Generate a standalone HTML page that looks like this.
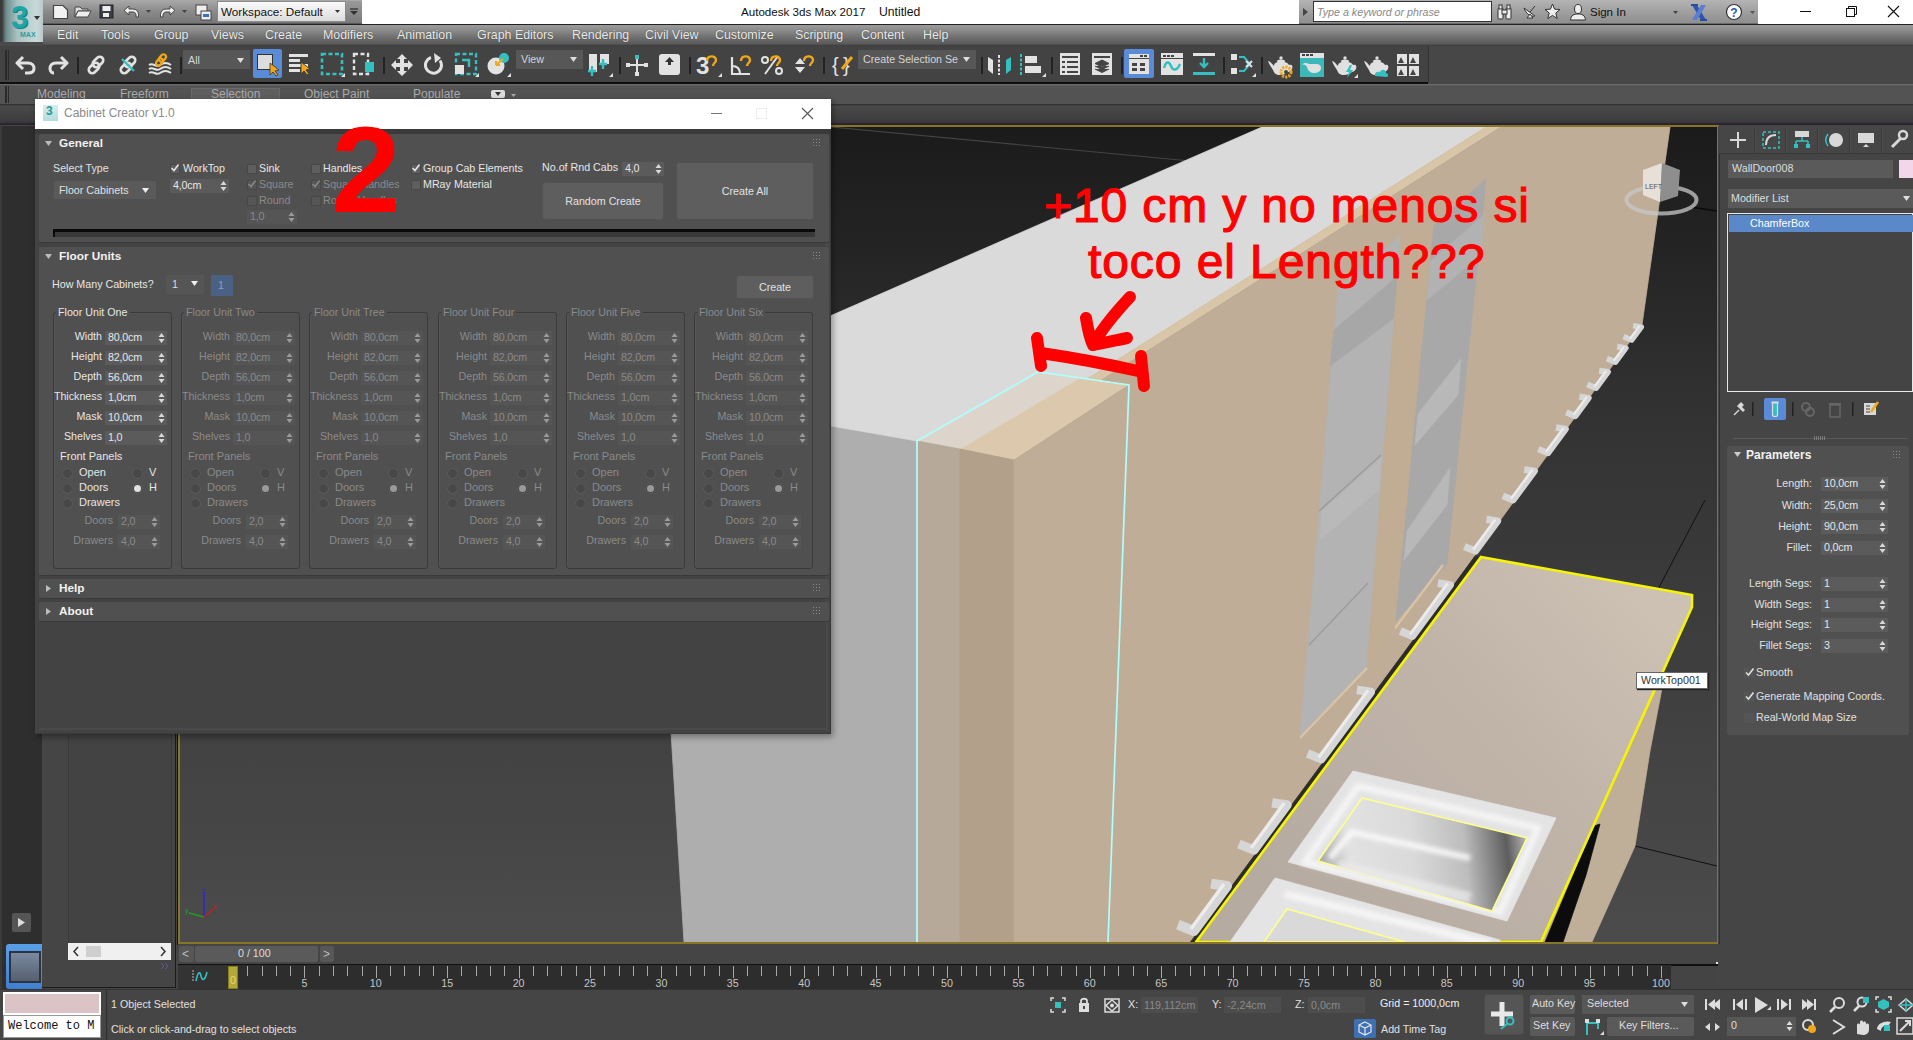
<!DOCTYPE html>
<html><head><meta charset="utf-8"><style>
*{box-sizing:border-box;margin:0;padding:0}
html,body{width:1913px;height:1040px;overflow:hidden;background:#444;font-family:"Liberation Sans",sans-serif;font-size:12px;color:#ddd}
.a{position:absolute}
.t{position:absolute;white-space:nowrap;line-height:1}
.sp{position:absolute;background:#565656;border-top:1px solid #3c3c3c}
.sp b{position:absolute;right:3px;top:2px;width:5px;height:9px}
.btn{position:absolute;background:#5e5e5e;border:1px solid #525252;border-radius:3px;color:#e2e2e2;text-align:center}
</style></head><body>
<div class="a" style="left:0px;top:0px;width:1913px;height:24px;background:#fff"></div>
<div class="a" style="left:0px;top:0px;width:43px;height:43px;background:linear-gradient(90deg,#3a3a3a 0,#3a3a3a 2px,#6f8c8c 6px,#a9c2c2 40%,#c9d9d9 85%,#b9c9c9 100%)"></div>
<div class="t" style="left:11px;top:2px;font-size:31px;font-weight:bold;color:#1ea5a5;letter-spacing:-1px;text-shadow:1px 1px 0 #157f7f">3</div>
<svg class="a" style="left:34px;top:16px" width="6" height="4"><path d="M0 0H6L3 4Z" fill="#333"/></svg>
<div class="t" style="left:20px;top:31px;font-size:7px;font-weight:bold;color:#2a9f9f">MAX</div>
<div class="a" style="left:43px;top:0px;width:319px;height:24px;background:linear-gradient(#a9a9a9,#8a8a8a 50%,#777 100%);border-bottom:1px solid #5a5a5a"></div>
<svg class="a" style="left:52px;top:4px" width="18" height="16"><path d="M1.5 1.5H11L15.5 6V14.5H1.5Z" fill="#f2f2f2" stroke="#444" stroke-width="1.2"/></svg>
<svg class="a" style="left:74px;top:5px" width="18" height="14"><path d="M1 2H6L8 4H14V6H4L1 12Z" fill="#ddd" stroke="#444"/><path d="M4 6H17L14 12H1Z" fill="#eee" stroke="#444"/></svg>
<svg class="a" style="left:99px;top:4px" width="16" height="16"><rect x="1" y="1" width="13" height="13" fill="#3d3d4a" stroke="#222"/><rect x="3.5" y="2" width="8" height="5" fill="#eee"/><rect x="4" y="9" width="6" height="4" fill="#eee"/></svg>
<svg class="a" style="left:123px;top:5px" width="18" height="13"><path d="M6 1L1 5.5L6 10V7H10C12 7 13 8.5 13 10V12H15.5V9.5C15.5 6 13 4 10 4H6Z" fill="#eee" stroke="#444"/></svg>
<svg class="a" style="left:146px;top:10px" width="5" height="3"><path d="M0 0H5L2.5 3Z" fill="#444"/></svg>
<svg class="a" style="left:158px;top:5px" width="18" height="13"><path d="M12 1L17 5.5L12 10V7H8C6 7 5 8.5 5 10V12H2.5V9.5C2.5 6 5 4 8 4H12Z" fill="#eee" stroke="#444"/></svg>
<svg class="a" style="left:182px;top:10px" width="5" height="3"><path d="M0 0H5L2.5 3Z" fill="#444"/></svg>
<svg class="a" style="left:195px;top:3px" width="18" height="18"><rect x="1" y="2" width="11" height="10" fill="#eee" stroke="#444"/><rect x="6" y="8" width="10" height="9" fill="#eee" stroke="#444"/><rect x="8" y="11" width="6" height="3" fill="#3b6fb6"/></svg>
<div class="a" style="left:217px;top:1px;width:129px;height:21px;background:linear-gradient(#fafafa,#dcdcdc);border:1px solid #8a8a8a"></div>
<div class="t" style="left:221px;top:6px;font-size:11.7px;color:#111;">Workspace: Default</div>
<svg class="a" style="left:335px;top:10px" width="5" height="3"><path d="M0 0H5L2.5 3Z" fill="#333"/></svg>
<div class="a" style="left:347px;top:1px;width:15px;height:21px;background:linear-gradient(#9a9a9a,#7c7c7c)"></div>
<svg class="a" style="left:349px;top:8px" width="10" height="8"><path d="M1 1H9" stroke="#333" stroke-width="1.3"/><path d="M1 3H9L5 7Z" fill="#333"/></svg>
<div class="t" style="left:741px;top:6px;font-size:11.6px;color:#111;">Autodesk 3ds Max 2017</div>
<div class="t" style="left:879px;top:6px;font-size:12.2px;color:#111;">Untitled</div>
<div class="a" style="left:1299px;top:0px;width:459px;height:24px;background:linear-gradient(#b4b4b4,#9c9c9c 60%,#8f8f8f);border-bottom:1px solid #6a6a6a"></div>
<svg class="a" style="left:1303px;top:8px" width="5" height="8"><path d="M0 0L5 4L0 8Z" fill="#444"/></svg>
<div class="a" style="left:1313px;top:1px;width:179px;height:21px;background:#fff;border:1px solid #333"></div>
<div class="t" style="left:1317px;top:7px;font-size:10.7px;color:#888;font-style:italic">Type a keyword or phrase</div>
<svg class="a" style="left:1496px;top:4px" width="18" height="16"><rect x="2" y="4" width="5" height="11" rx="1" fill="#eee" stroke="#333"/><rect x="10" y="4" width="5" height="11" rx="1" fill="#eee" stroke="#333"/><rect x="3" y="1" width="3" height="4" fill="#eee" stroke="#333"/><rect x="11" y="1" width="3" height="4" fill="#eee" stroke="#333"/><rect x="6" y="6" width="5" height="4" fill="#eee" stroke="#333"/></svg>
<svg class="a" style="left:1521px;top:4px" width="17" height="17"><path d="M3 4C5 10 10 13 14 12Z" fill="#eee" stroke="#333"/><path d="M6 14L9 10L12 14Z" fill="#eee" stroke="#333"/><path d="M9 8L14 2" stroke="#333"/></svg>
<svg class="a" style="left:1544px;top:3px" width="17" height="17"><path d="M8.5 1L10.6 6.2L16 6.5L11.8 10L13.2 15.5L8.5 12.4L3.8 15.5L5.2 10L1 6.5L6.4 6.2Z" fill="#eee" stroke="#333"/></svg>
<svg class="a" style="left:1569px;top:3px" width="18" height="18"><ellipse cx="9" cy="6" rx="3.5" ry="4.5" fill="#eee" stroke="#333"/><path d="M1.5 17C2 12 5 11 9 11C13 11 16 12 16.5 17Z" fill="#eee" stroke="#333"/></svg>
<div class="t" style="left:1590px;top:7px;font-size:11.5px;color:#111;">Sign In</div>
<svg class="a" style="left:1673px;top:11px" width="5" height="3"><path d="M0 0H5L2.5 3Z" fill="#444"/></svg>
<svg class="a" style="left:1690px;top:4px" width="18" height="17"><path d="M2 1H7L16 16H11Z" fill="#2f55b0"/><path d="M16 1H11L2 16H7Z" fill="#5a7fd0"/><path d="M1 1H8M10 16H17" stroke="#2a4a9a" stroke-width="2"/></svg>
<svg class="a" style="left:1725px;top:3px" width="18" height="18"><circle cx="9" cy="9" r="7.5" fill="#fff" stroke="#333" stroke-width="1.2"/><text x="9" y="13.5" font-family="Liberation Sans" font-weight="bold" font-size="12" fill="#2a57b5" text-anchor="middle">?</text></svg>
<svg class="a" style="left:1750px;top:11px" width="5" height="3"><path d="M0 0H5L2.5 3Z" fill="#555"/></svg>
<svg class="a" style="left:1800px;top:5px" width="110" height="14"><path d="M0 6.5H11" stroke="#111" stroke-width="1"/><rect x="46.5" y="3.5" width="8" height="8" fill="none" stroke="#111"/><path d="M48.5 3.5V1.5H56.5V9.5H54.5" fill="none" stroke="#111"/><path d="M88 1L99 12M99 1L88 12" stroke="#111" stroke-width="1.1"/></svg>
<div class="a" style="left:43px;top:24px;width:1870px;height:22px;background:linear-gradient(#222 0,#222 1px,#9c9c9c 1px,#8a8a8a 30%,#6c6c6c 65%,#5a5a5a 90%,#3a3a3a 100%)"></div>
<div class="a" style="left:0px;top:42px;width:43px;height:4px;background:#4a4a4a"></div>
<div class="t" style="left:57px;top:29px;font-size:12.4px;color:#ececec;text-shadow:0 0 1px #333">Edit</div>
<div class="t" style="left:101px;top:29px;font-size:12.4px;color:#ececec;text-shadow:0 0 1px #333">Tools</div>
<div class="t" style="left:154px;top:29px;font-size:12.4px;color:#ececec;text-shadow:0 0 1px #333">Group</div>
<div class="t" style="left:211px;top:29px;font-size:12.4px;color:#ececec;text-shadow:0 0 1px #333">Views</div>
<div class="t" style="left:265px;top:29px;font-size:12.4px;color:#ececec;text-shadow:0 0 1px #333">Create</div>
<div class="t" style="left:323px;top:29px;font-size:12.4px;color:#ececec;text-shadow:0 0 1px #333">Modifiers</div>
<div class="t" style="left:397px;top:29px;font-size:12.4px;color:#ececec;text-shadow:0 0 1px #333">Animation</div>
<div class="t" style="left:477px;top:29px;font-size:12.4px;color:#ececec;text-shadow:0 0 1px #333">Graph Editors</div>
<div class="t" style="left:572px;top:29px;font-size:12.4px;color:#ececec;text-shadow:0 0 1px #333">Rendering</div>
<div class="t" style="left:645px;top:29px;font-size:12.4px;color:#ececec;text-shadow:0 0 1px #333">Civil View</div>
<div class="t" style="left:715px;top:29px;font-size:12.4px;color:#ececec;text-shadow:0 0 1px #333">Customize</div>
<div class="t" style="left:795px;top:29px;font-size:12.4px;color:#ececec;text-shadow:0 0 1px #333">Scripting</div>
<div class="t" style="left:861px;top:29px;font-size:12.4px;color:#ececec;text-shadow:0 0 1px #333">Content</div>
<div class="t" style="left:923px;top:29px;font-size:12.4px;color:#ececec;text-shadow:0 0 1px #333">Help</div>
<div class="a" style="left:0px;top:46px;width:1428px;height:37px;background:#434343"></div>
<div class="a" style="left:1428px;top:46px;width:485px;height:37px;background:#474747;border-left:1px solid #333"></div>
<div class="a" style="left:0px;top:82px;width:1428px;height:2px;background:#0e0e0e"></div>
<div class="a" style="left:1428px;top:82px;width:485px;height:2px;background:#474747"></div>
<div class="a" style="left:0px;top:84px;width:1913px;height:1px;background:#6a6a6a"></div>
<div class="a" style="left:5px;top:50px;width:2px;height:30px;background:#2a2a2a"></div>
<div class="a" style="left:8px;top:50px;width:1px;height:30px;background:#2a2a2a"></div>
<div class="a" style="left:77px;top:57px;width:2px;height:17px;background:#222"></div>
<div class="a" style="left:180px;top:57px;width:2px;height:17px;background:#222"></div>
<div class="a" style="left:383px;top:57px;width:2px;height:17px;background:#222"></div>
<div class="a" style="left:619px;top:57px;width:2px;height:17px;background:#222"></div>
<div class="a" style="left:689px;top:57px;width:2px;height:17px;background:#222"></div>
<div class="a" style="left:823px;top:57px;width:2px;height:17px;background:#222"></div>
<div class="a" style="left:981px;top:57px;width:2px;height:17px;background:#222"></div>
<div class="a" style="left:1051px;top:57px;width:2px;height:17px;background:#222"></div>
<div class="a" style="left:1121px;top:57px;width:2px;height:17px;background:#222"></div>
<div class="a" style="left:1223px;top:57px;width:2px;height:17px;background:#222"></div>
<div class="a" style="left:1261px;top:57px;width:2px;height:17px;background:#222"></div>
<svg class="a" style="left:15px;top:55px" width="23" height="20"><path d="M8 2L2 8L8 14" fill="none" stroke="#e2e2e2" stroke-width="3" stroke-linejoin="round"/><path d="M3 8H13C17 8 19 10.5 19 13.5C19 16.5 17 18 13 18H10" fill="none" stroke="#e2e2e2" stroke-width="3"/></svg>
<svg class="a" style="left:46px;top:55px" width="23" height="20"><path d="M15 2L21 8L15 14" fill="none" stroke="#e2e2e2" stroke-width="3" stroke-linejoin="round"/><path d="M20 8H10C6 8 4 10.5 4 13.5C4 16.5 6 18 8 18" fill="none" stroke="#e2e2e2" stroke-width="3"/></svg>
<svg class="a" style="left:85px;top:54px" width="22" height="22"><g fill="none" stroke="#e2e2e2" stroke-width="2.6"><rect x="9.5" y="2" width="7" height="12" rx="3.5" transform="rotate(45 13 8)"/><rect x="5.5" y="8" width="7" height="12" rx="3.5" transform="rotate(45 9 14)"/></g></svg>
<svg class="a" style="left:117px;top:54px" width="22" height="22"><g fill="none" stroke="#e2e2e2" stroke-width="2.6"><rect x="9.5" y="2" width="7" height="12" rx="3.5" transform="rotate(45 13 8)"/><rect x="5.5" y="8" width="7" height="12" rx="3.5" transform="rotate(45 9 14)"/></g><path d="M5 5L17 17" stroke="#35c0c0" stroke-width="2.2"/></svg>
<svg class="a" style="left:148px;top:53px" width="24" height="24"><g fill="none" stroke="#e2e2e2" stroke-width="2"><path d="M1 12C5 9 8 15 12 12S19 9 23 12"/><path d="M1 16C5 13 8 19 12 16S19 13 23 16"/><path d="M1 20C5 17 8 23 12 20S19 17 23 20"/></g><g fill="none" stroke="#f0a818" stroke-width="2.2"><rect x="12" y="1" width="5" height="8" rx="2.5" transform="rotate(40 14.5 5)"/><rect x="9" y="5" width="5" height="8" rx="2.5" transform="rotate(40 11.5 9)"/></g></svg>
<div class="a" style="left:183px;top:50px;width:67px;height:19px;background:#575757"></div>
<div class="t" style="left:188px;top:55px;font-size:10.7px;color:#d5d5d5;">All</div>
<svg class="a" style="left:237px;top:58px" width="7" height="5"><path d="M0 0H7L3.5 5Z" fill="#ddd"/></svg>
<div class="a" style="left:253px;top:49px;width:29px;height:29px;background:#5a8bd6;border-radius:2px"></div>
<svg class="a" style="left:256px;top:53px" width="25" height="24"><rect x="1.5" y="1.5" width="15" height="15" fill="#ddd" stroke="#333"/><path d="M14 10L14 22L17 19L20 23L22 22L19 18L23 17Z" fill="#f0a818" stroke="#333" stroke-width="0.8"/></svg>
<svg class="a" style="left:288px;top:52px" width="24" height="24"><g fill="#e2e2e2"><rect x="1" y="2" width="19" height="3"/><rect x="1" y="7" width="11" height="3"/><rect x="1" y="12" width="19" height="3"/><rect x="1" y="17" width="11" height="3"/></g><path d="M13 10L13 22L16 19L19 23L21 22L18 18L22 17Z" fill="#f0a818" stroke="#333" stroke-width="0.8"/></svg>
<svg class="a" style="left:320px;top:52px" width="28" height="26"><rect x="2" y="2" width="20" height="20" fill="none" stroke="#35c0c0" stroke-width="2.6" stroke-dasharray="4 2.5"/><path d="M21 25H25V21Z" fill="#e2e2e2"/></svg>
<svg class="a" style="left:352px;top:52px" width="26" height="26"><rect x="2" y="2" width="14" height="20" fill="none" stroke="#e2e2e2" stroke-width="2.4" stroke-dasharray="4 2.5"/><rect x="13" y="10" width="9" height="10" fill="#35c0c0"/></svg>
<svg class="a" style="left:390px;top:53px" width="24" height="24"><path d="M12 1L17 6H14V10H18V7L23 12L18 17V14H14V18H17L12 23L7 18H10V14H6V17L1 12L6 7V10H10V6H7Z" fill="#e2e2e2"/></svg>
<svg class="a" style="left:424px;top:52px" width="22" height="26"><path d="M16 8.5A8 8 0 1 1 7 5.5" fill="none" stroke="#e2e2e2" stroke-width="3"/><path d="M10 1L17 6L11 11Z" fill="#e2e2e2"/></svg>
<svg class="a" style="left:454px;top:52px" width="26" height="26"><rect x="2" y="2" width="20" height="20" fill="none" stroke="#35c0c0" stroke-width="2.4" stroke-dasharray="4 2.5"/><path d="M8 8H15V15" fill="none" stroke="#35c0c0" stroke-width="2.4"/><rect x="1" y="13" width="9" height="9" fill="#e2e2e2"/><path d="M21 25H25V21Z" fill="#e2e2e2"/></svg>
<svg class="a" style="left:486px;top:52px" width="26" height="26"><circle cx="10" cy="14" r="8.5" fill="#e2e2e2"/><circle cx="18" cy="6" r="5" fill="#35c0c0"/><path d="M17 7L10 13M10 13V9M10 13H14" stroke="#f0a818" stroke-width="2" fill="none"/><path d="M21 25H25V21Z" fill="#e2e2e2"/></svg>
<div class="a" style="left:516px;top:50px;width:67px;height:19px;background:#575757"></div>
<div class="t" style="left:521px;top:54px;font-size:10.7px;color:#d5d5d5;">View</div>
<svg class="a" style="left:570px;top:57px" width="7" height="5"><path d="M0 0H7L3.5 5Z" fill="#ddd"/></svg>
<svg class="a" style="left:588px;top:52px" width="26" height="26"><rect x="1" y="2" width="8" height="18" fill="#e2e2e2"/><rect x="12" y="2" width="9" height="10" fill="#e2e2e2"/><path d="M4 14V24M0 19H8M15 7V17M11 12H19" stroke="#35c0c0" stroke-width="2.4"/><path d="M21 25H25V21Z" fill="#e2e2e2"/></svg>
<svg class="a" style="left:625px;top:53px" width="24" height="24"><path d="M3 12H21M12 3V21" stroke="#e2e2e2" stroke-width="2"/><rect x="10" y="2" width="4" height="4" fill="#35c0c0"/><rect x="1" y="10" width="4" height="4" fill="#e2e2e2"/><rect x="19" y="10" width="4" height="4" fill="#e2e2e2"/><rect x="10" y="19" width="4" height="4" fill="#e2e2e2"/></svg>
<svg class="a" style="left:658px;top:53px" width="24" height="24"><rect x="1" y="1" width="21" height="21" rx="3" fill="#e2e2e2"/><path d="M11.5 4L16 9H13V12H10V9H7Z" fill="#333"/></svg>
<svg class="a" style="left:696px;top:52px" width="28" height="26"><text x="0" y="22" font-family="Liberation Sans" font-weight="bold" font-size="24" fill="#e2e2e2">3</text><path d="M11 9C11 3 20 3 20 8C20 11 17 11 17 14" fill="none" stroke="#f0a818" stroke-width="2.4"/><path d="M22 25H26V21Z" fill="#e2e2e2"/></svg>
<svg class="a" style="left:729px;top:52px" width="26" height="26"><path d="M3 5V22H21M3 14C8 14 11 17 11 22" fill="none" stroke="#e2e2e2" stroke-width="2.2"/><path d="M12 9C12 3 21 3 21 8C21 11 18 11 18 14" fill="none" stroke="#f0a818" stroke-width="2.4"/></svg>
<svg class="a" style="left:760px;top:52px" width="26" height="26"><circle cx="5" cy="8" r="3" fill="none" stroke="#e2e2e2" stroke-width="2"/><circle cx="19" cy="19" r="3" fill="none" stroke="#e2e2e2" stroke-width="2"/><path d="M5 22L18 4" stroke="#e2e2e2" stroke-width="2"/><path d="M11 9C11 3 20 3 20 8C20 11 17 11 17 14" fill="none" stroke="#f0a818" stroke-width="2.4"/></svg>
<svg class="a" style="left:792px;top:52px" width="26" height="26"><path d="M3 12L8 6L13 12Z M3 15L8 21L13 15Z" fill="#e2e2e2"/><path d="M12 9C12 3 21 3 21 8C21 11 18 11 18 14" fill="none" stroke="#f0a818" stroke-width="2.4"/></svg>
<svg class="a" style="left:832px;top:52px" width="24" height="26"><text x="0" y="20" font-family="Liberation Sans" font-size="20" fill="#e2e2e2">{</text><text x="11" y="20" font-family="Liberation Sans" font-size="20" fill="#e2e2e2">}</text><path d="M10 17L20 5" stroke="#f0a818" stroke-width="3"/></svg>
<div class="a" style="left:858px;top:50px;width:118px;height:19px;background:#575757"></div>
<div class="t" style="left:863px;top:54px;font-size:10.7px;color:#d5d5d5;">Create Selection Se</div>
<svg class="a" style="left:963px;top:57px" width="7" height="5"><path d="M0 0H7L3.5 5Z" fill="#ddd"/></svg>
<svg class="a" style="left:987px;top:53px" width="26" height="24"><path d="M1 4L6 7V21L1 17Z" fill="#e2e2e2"/><path d="M12 2V22" stroke="#e2e2e2" stroke-width="2" stroke-dasharray="3 1.5"/><path d="M19 7L24 4V17L19 21Z" fill="#35c0c0"/></svg>
<svg class="a" style="left:1019px;top:52px" width="28" height="26"><path d="M2 2V24" stroke="#35c0c0" stroke-width="2" stroke-dasharray="3 1.5"/><rect x="6" y="4" width="12" height="7" fill="#e2e2e2"/><rect x="6" y="14" width="16" height="7" fill="#e2e2e2"/><path d="M23 25H27V21Z" fill="#e2e2e2"/></svg>
<svg class="a" style="left:1059px;top:52px" width="24" height="25"><rect x="1" y="1" width="20" height="22" fill="#e2e2e2"/><rect x="3" y="4" width="16" height="2" fill="#444"/><rect x="3" y="9" width="3" height="2" fill="#444"/><rect x="8" y="9" width="11" height="2" fill="#444"/><rect x="3" y="14" width="3" height="2" fill="#444"/><rect x="8" y="14" width="11" height="2" fill="#444"/><rect x="3" y="19" width="3" height="2" fill="#444"/><rect x="8" y="19" width="11" height="2" fill="#444"/></svg>
<svg class="a" style="left:1091px;top:52px" width="24" height="25"><rect x="1" y="1" width="20" height="22" fill="#e2e2e2"/><rect x="3" y="4" width="16" height="2" fill="#444"/><path d="M11 8L18 11.5L11 15L4 11.5Z M4 14L11 17.5L18 14 M4 17L11 20.5L18 17" fill="#444" stroke="#444"/></svg>
<div class="a" style="left:1124px;top:49px;width:30px;height:29px;background:#5a8bd6;border-radius:2px"></div>
<svg class="a" style="left:1128px;top:53px" width="22" height="22"><rect x="1" y="1" width="20" height="20" fill="#e2e2e2"/><rect x="12" y="2" width="3" height="2" fill="#444"/><rect x="16" y="2" width="3" height="2" fill="#444"/><rect x="1" y="5" width="20" height="1" fill="#444"/><rect x="4" y="10" width="5" height="3" fill="#444"/><rect x="12" y="10" width="5" height="3" fill="#444"/><rect x="4" y="15" width="5" height="3" fill="#444"/><rect x="12" y="15" width="5" height="3" fill="#444"/></svg>
<svg class="a" style="left:1160px;top:52px" width="24" height="24"><rect x="1" y="1" width="22" height="22" fill="#e2e2e2"/><rect x="3" y="3" width="3" height="2" fill="#444"/><rect x="7" y="3" width="3" height="2" fill="#444"/><rect x="11" y="3" width="3" height="2" fill="#444"/><rect x="1" y="6" width="22" height="1" fill="#444"/><path d="M4 16C6 9 9 9 11 14S17 19 20 12" fill="none" stroke="#35c0c0" stroke-width="2.4"/></svg>
<svg class="a" style="left:1191px;top:52px" width="26" height="24"><rect x="2" y="1" width="22" height="3" fill="#e2e2e2"/><path d="M13 6V14M9 11L13 15L17 11" fill="none" stroke="#35c0c0" stroke-width="2.4"/><rect x="2" y="20" width="22" height="3" fill="#35c0c0"/></svg>
<svg class="a" style="left:1230px;top:52px" width="26" height="26"><rect x="1" y="2" width="6" height="6" fill="#e2e2e2"/><rect x="1" y="16" width="6" height="6" fill="#e2e2e2"/><path d="M9 5H14L20 12L14 19H9" fill="none" stroke="#35c0c0" stroke-width="2"/><path d="M16 9L22 15M22 9L16 15" stroke="#e2e2e2" stroke-width="2"/><path d="M22 25H26V21Z" fill="#e2e2e2"/></svg>
<svg class="a" style="left:1266px;top:53px" width="28" height="26"><path d="M2 8C4 8 6 11 8 13C8 10 11 8.5 15 8.5C19 8.5 22 10 23 12C26 11 27 13 26 16C25 18 23 19 22 19C20 21 17 22 14 22C10 22 8 20 7 17C5 14 3 11 2 8Z" fill="#e0e0e0"/><ellipse cx="15" cy="8" rx="4" ry="1.6" fill="#e0e0e0"/><circle cx="15" cy="5" r="1.7" fill="#e0e0e0"/><circle cx="20" cy="19" r="5" fill="none" stroke="#f0a818" stroke-width="3" stroke-dasharray="2 1.2"/><circle cx="20" cy="19" r="2" fill="#444"/></svg>
<div class="a" style="left:1300px;top:53px;width:24px;height:24px;background:#3bb8b8"></div>
<svg class="a" style="left:1300px;top:53px" width="24" height="24"><rect x="0" y="0" width="24" height="5" fill="#e2e2e2"/><rect x="2" y="1" width="3" height="2" fill="#444"/><rect x="6" y="1" width="3" height="2" fill="#444"/><rect x="10" y="1" width="3" height="2" fill="#444"/><path d="M2 12C4 11 6 12 7 14C8 18 11 20 14 20C18 20 21 18 21 15C21 12 19 11 16 11H9C7 10 4 9 2 12Z" fill="#e0e0e0"/></svg>
<svg class="a" style="left:1330px;top:53px" width="28" height="26"><path d="M2 8C4 8 6 11 8 13C8 10 11 8.5 15 8.5C19 8.5 22 10 23 12C26 11 27 13 26 16C25 18 23 19 22 19C20 21 17 22 14 22C10 22 8 20 7 17C5 14 3 11 2 8Z" fill="#e0e0e0"/><ellipse cx="15" cy="8" rx="4" ry="1.6" fill="#e0e0e0"/><circle cx="15" cy="5" r="1.7" fill="#e0e0e0"/><path d="M20 12L16 19H19L17 25L23 17H20L22 12Z" fill="#35c0c0"/><path d="M24 25H28V21Z" fill="#e2e2e2"/></svg>
<svg class="a" style="left:1362px;top:53px" width="28" height="26"><path d="M2 8C4 8 6 11 8 13C8 10 11 8.5 15 8.5C19 8.5 22 10 23 12C26 11 27 13 26 16C25 18 23 19 22 19C20 21 17 22 14 22C10 22 8 20 7 17C5 14 3 11 2 8Z" fill="#e0e0e0"/><ellipse cx="15" cy="8" rx="4" ry="1.6" fill="#e0e0e0"/><circle cx="15" cy="5" r="1.7" fill="#e0e0e0"/><path d="M13 23C12 19 16 18 18 19C19 16 24 16 24 20C26 20 27 23 25 24Z" fill="#35c0c0"/></svg>
<svg class="a" style="left:1396px;top:53px" width="24" height="24"><g fill="#e2e2e2"><rect x="1" y="1" width="10" height="10"/><rect x="13" y="1" width="10" height="10"/><rect x="1" y="13" width="10" height="10"/><rect x="13" y="13" width="10" height="10"/></g><g fill="#444"><path d="M2 10L5 4L8 10Z M14 10L17 4L20 10Z M2 22L5 16L8 22Z M14 22L17 16L20 22Z"/></g></svg>
<div class="a" style="left:0px;top:85px;width:1913px;height:19px;background:#535353"></div>
<div class="a" style="left:5px;top:86px;width:2px;height:17px;background:#2a2a2a"></div>
<div class="a" style="left:8px;top:86px;width:1px;height:17px;background:#2a2a2a"></div>
<div class="a" style="left:12px;top:85px;width:1901px;height:19px;background:#535353;border-top:1px solid #5c5c5c"></div>
<div class="a" style="left:191px;top:88px;width:89px;height:15px;background:#5e5e5e;border:1px solid #6a6a6a;border-bottom:none"></div>
<div class="t" style="left:37px;top:88px;font-size:12px;color:#aaa;">Modeling</div>
<div class="t" style="left:120px;top:88px;font-size:12px;color:#aaa;">Freeform</div>
<div class="t" style="left:211px;top:88px;font-size:12px;color:#aaa;">Selection</div>
<div class="t" style="left:304px;top:88px;font-size:12px;color:#aaa;">Object Paint</div>
<div class="t" style="left:413px;top:88px;font-size:12px;color:#aaa;">Populate</div>
<svg class="a" style="left:491px;top:90px" width="26" height="9"><rect x="0" y="0" width="14" height="8" rx="2" fill="#ddd"/><path d="M4 2H10L7 6Z" fill="#333"/><path d="M20 4H25L22.5 7Z" fill="#aaa"/></svg>
<div class="a" style="left:0px;top:104px;width:1913px;height:21px;background:linear-gradient(#333 0,#333 1px,#4a4a4a 2px,#3c3c3c 17px,#3a3948 18px,#2a2228 20px)"></div>
<div class="a" style="left:0px;top:126px;width:42px;height:866px;background:#2e2e2e;border-left:2px solid #3a3a3a"></div>
<div class="a" style="left:42px;top:126px;width:136px;height:866px;background:#454545"></div>
<div class="a" style="left:68px;top:126px;width:104px;height:817px;background:#434343;border-left:1px solid #3a3a3a;border-right:1px solid #3a3a3a"></div>
<div class="a" style="left:68px;top:943px;width:103px;height:17px;background:#f0f0f0"></div>
<svg class="a" style="left:72px;top:946px" width="96" height="11"><path d="M6 1L2 5.5L6 10" fill="none" stroke="#333" stroke-width="1.5"/><rect x="14" y="0" width="15" height="11" fill="#cfcfcf"/><path d="M89 1L93 5.5L89 10" fill="none" stroke="#333" stroke-width="1.5"/></svg>
<svg class="a" style="left:161px;top:963px" width="8" height="6"><path d="M0 0L3 3L0 6M4 0L7 3L4 6" fill="none" stroke="#5a5aa0"/></svg>
<div class="a" style="left:12px;top:913px;width:19px;height:19px;background:#555;border-radius:2px"></div>
<svg class="a" style="left:18px;top:918px" width="7" height="9"><path d="M0 0L7 4.5L0 9Z" fill="#ddd"/></svg>
<div class="a" style="left:6px;top:944px;width:36px;height:45px;background:linear-gradient(#5aa0e6,#3f7fd0);border-radius:3px 0 0 3px"></div>
<div class="a" style="left:9px;top:951px;width:32px;height:32px;background:linear-gradient(#7a8aa0,#556070);border:2px solid #2c3440"></div>
<div class="a" style="left:175px;top:126px;width:1px;height:862px;background:#1a1a1a"></div>
<div class="a" style="left:42px;top:987px;width:134px;height:1px;background:#1a1a1a"></div>
<div class="a" style="left:176px;top:944px;width:2px;height:46px;background:#454545"></div>
<div class="a" style="left:177px;top:125px;width:1542px;height:820px;background:#877629;border-left:1px solid #111"></div>
<svg class="a" style="left:0;top:0" width="1913" height="1040" viewBox="0 0 1913 1040">
<defs><linearGradient id="bg" x1="0" y1="127" x2="0" y2="942" gradientUnits="userSpaceOnUse"><stop offset="0" stop-color="#1b1b1b"/><stop offset="0.15" stop-color="#242424"/><stop offset="0.36" stop-color="#333333"/><stop offset="0.62" stop-color="#3d3d3d"/><stop offset="0.96" stop-color="#4a4a4a"/><stop offset="1" stop-color="#4b4b4b"/></linearGradient><linearGradient id="side" x1="680" y1="0" x2="917" y2="0" gradientUnits="userSpaceOnUse"><stop offset="0" stop-color="#b3b3b3"/><stop offset="1" stop-color="#a9a9a9"/></linearGradient><linearGradient id="wt" x1="1300" y1="900" x2="1650" y2="600" gradientUnits="userSpaceOnUse"><stop offset="0" stop-color="#b6aba1"/><stop offset="0.6" stop-color="#c1b5aa"/><stop offset="1" stop-color="#cdc1b4"/></linearGradient><linearGradient id="sink" x1="1318" y1="861" x2="1527" y2="838" gradientUnits="userSpaceOnUse"><stop offset="0" stop-color="#a8a8a8"/><stop offset="0.15" stop-color="#e2e2e2"/><stop offset="0.45" stop-color="#dadada"/><stop offset="0.7" stop-color="#bdbdbd"/><stop offset="0.9" stop-color="#5e5e5e"/><stop offset="1" stop-color="#b8b8b8"/></linearGradient><linearGradient id="rim" x1="1300" y1="780" x2="1520" y2="900" gradientUnits="userSpaceOnUse"><stop offset="0" stop-color="#e2e2e2"/><stop offset="0.5" stop-color="#f0f0f0"/><stop offset="1" stop-color="#dadada"/></linearGradient><filter id="blr" x="-20%" y="-20%" width="140%" height="140%"><feGaussianBlur stdDeviation="2.2"/></filter><clipPath id="vpc"><rect x="180" y="127" width="1537" height="815"/></clipPath></defs>
<g clip-path="url(#vpc)">
<rect x="180" y="127" width="1537" height="815" fill="url(#bg)"/>
<path d="M831 127L1190 161" stroke="#444" stroke-width="1.2"/>
<path d="M1690 207L1717 211" stroke="#0a0a0a" stroke-width="1.5"/>
<path d="M1635 846L1717 866" stroke="#111" stroke-width="1" fill="none"/>
<path d="M1705 500L1655 595" stroke="#111" stroke-width="1" fill="none"/>
<polygon points="650,393 917,441 917,942 684,942" fill="#aeaeae"  stroke="#aeaeae" stroke-width="0.8"/>
<polygon points="700,373 1262,127 1486,127 1087,379 1038,372 917,441 700,403" fill="#dadada"  stroke="#dadada" stroke-width="0.8"/>
<polygon points="1087,379 1486,127 1501,127 1100,381" fill="#d9c6a9"  stroke="#d9c6a9" stroke-width="0.8"/>
<polygon points="1501,127 1670,127 1642,325 1194,942 1108,942 1129,385 1100,381" fill="#bfad97"  stroke="#bfad97" stroke-width="0.8"/>
<polygon points="917,441 1038,372 1129,385 1014,460" fill="#dcc9ad"  stroke="#dcc9ad" stroke-width="0.8"/>
<polygon points="917,441 1038,372 1078,379 960,449" fill="#ddd5cb"  stroke="#ddd5cb" stroke-width="0.8"/>
<polygon points="917,441 960,449 960,942 917,942" fill="#b6a999"  stroke="#b6a999" stroke-width="0.8"/>
<polygon points="960,449 1014,460 1014,942 960,942" fill="#b2a08a"  stroke="#b2a08a" stroke-width="0.8"/>
<polygon points="1014,460 1129,385 1108,942 1014,942" fill="#bfad97"  stroke="#bfad97" stroke-width="0.8"/>
<polygon points="1338,289 1401,235 1367,668 1300,737" fill="#b3b3b3"  stroke="#b3b3b3" stroke-width="0.8"/>
<polygon points="1334,330 1398,276 1394,318 1330,366" fill="#a7a7a7"  stroke="#a7a7a7" stroke-width="0.8"/>
<path d="M1319 511L1381 455 M1309 645L1368 583" stroke="#9c9c9c" stroke-width="1.5"/>
<polygon points="1322,511 1381,458 1379,490 1320,540" fill="#b9b9b9"  stroke="#b9b9b9" stroke-width="0.8"/>
<polygon points="1433,226 1486,179 1447,564 1395,622" fill="#a8a8a8"  stroke="#a8a8a8" stroke-width="0.8"/>
<polygon points="1430,262 1484,215 1481,255 1427,300" fill="#b2b2b2"  stroke="#b2b2b2" stroke-width="0.8"/>
<polygon points="1418,414 1461,359 1458,395 1415,445" fill="#b8b8b8"  stroke="#b8b8b8" stroke-width="0.8"/>
<polygon points="1407,531 1450,468 1447,505 1404,560" fill="#b8b8b8"  stroke="#b8b8b8" stroke-width="0.8"/>
<polygon points="1401,235 1433,226 1395,622 1367,668" fill="#c0ad94"  stroke="#c0ad94" stroke-width="0.8"/>
<polygon points="1474.5,557 1481,557 1196,942 1190.5,942" fill="#2c2c2c"  stroke="#2c2c2c" stroke-width="0.8"/>
<polygon points="1655,683 1663,683 1650,751 1635,846 1592,942 1541,942" fill="#bfae98"  stroke="#bfae98" stroke-width="0.8"/>
<polygon points="1594,826 1600,824 1586,875 1563,942 1545,942" fill="#0c0c0c"  stroke="#0c0c0c" stroke-width="0.8"/>
<polygon points="1481,557 1692,595 1692,607 1541,942 1196,942" fill="url(#wt)" stroke="#f5f500" stroke-width="2.6"/>
<polygon points="1353,771 1556,818 1507,921 1288,862" fill="#e4e4e4"  stroke="#e4e4e4" stroke-width="0.8"/>
<polygon points="1358,786 1538,828 1500,912 1305,862" fill="none" stroke="#f8f8f8" stroke-width="6" opacity="0.9" filter="url(#blr)"/>
<polygon points="1362,798 1527,838 1492,911 1318,861" fill="url(#sink)" stroke="#ffff8a" stroke-width="1.6"/>
<path d="M1330 858L1352 832L1470 858" fill="none" stroke="#fafafa" stroke-width="6" opacity="0.9" filter="url(#blr)"/>
<path d="M1338 866L1470 898" fill="none" stroke="#ececec" stroke-width="12" opacity="0.7" filter="url(#blr)"/>
<polygon points="1275,878 1500,940 1500,942 1230,942" fill="#e4e4e4"  stroke="#e4e4e4" stroke-width="0.8"/>
<path d="M1285 894L1490 944" fill="none" stroke="#f8f8f8" stroke-width="7" opacity="0.9" filter="url(#blr)"/>
<polygon points="1287,909 1405,942 1264,942" fill="#d9d9d9" stroke="#ffff8a" stroke-width="1.6"/>
<path d="M1177.9 924.6L1193.9 931.0L1227.0 886.0L1211.0 883.6" fill="none" stroke="#d6d6d6" stroke-width="10.0" stroke-linejoin="round"/>
<path d="M1190.9 929.0L1224.0 884.0" fill="none" stroke="#ececec" stroke-width="3.5"/>
<path d="M1238.9 844.0L1253.9 850.0L1287.0 805.0L1272.1 802.8" fill="none" stroke="#d6d6d6" stroke-width="9.4" stroke-linejoin="round"/>
<path d="M1251.1 848.1L1284.2 803.1" fill="none" stroke="#ececec" stroke-width="3.3"/>
<path d="M1307.6 753.5L1321.3 759.0L1370.7 692.0L1356.9 689.9" fill="none" stroke="#d6d6d6" stroke-width="8.7" stroke-linejoin="round"/>
<path d="M1318.7 757.3L1368.0 690.3" fill="none" stroke="#ececec" stroke-width="3.1"/>
<path d="M1400.3 631.2L1412.4 636.0L1450.0 585.0L1437.9 583.2" fill="none" stroke="#d6d6d6" stroke-width="7.8" stroke-linejoin="round"/>
<path d="M1410.1 634.4L1447.6 583.4" fill="none" stroke="#ececec" stroke-width="2.7"/>
<path d="M1464.4 546.6L1475.4 551.0L1497.5 521.0L1486.5 519.4" fill="none" stroke="#d6d6d6" stroke-width="7.2" stroke-linejoin="round"/>
<path d="M1473.2 549.6L1495.3 519.6" fill="none" stroke="#ececec" stroke-width="2.5"/>
<path d="M1502.8 495.9L1513.1 500.0L1534.5 471.0L1524.2 469.5" fill="none" stroke="#d6d6d6" stroke-width="6.8" stroke-linejoin="round"/>
<path d="M1511.1 498.6L1532.5 469.6" fill="none" stroke="#ececec" stroke-width="2.4"/>
<path d="M1538.3 449.1L1547.9 453.0L1565.6 429.0L1556.0 427.5" fill="none" stroke="#d6d6d6" stroke-width="6.4" stroke-linejoin="round"/>
<path d="M1546.0 451.7L1563.7 427.7" fill="none" stroke="#ececec" stroke-width="2.3"/>
<path d="M1566.2 412.3L1575.4 416.0L1588.6 398.0L1579.4 396.6" fill="none" stroke="#d6d6d6" stroke-width="6.2" stroke-linejoin="round"/>
<path d="M1573.5 414.8L1586.8 396.8" fill="none" stroke="#ececec" stroke-width="2.2"/>
<path d="M1587.3 384.5L1596.1 388.0L1607.9 372.0L1599.1 370.7" fill="none" stroke="#d6d6d6" stroke-width="6.0" stroke-linejoin="round"/>
<path d="M1594.3 386.8L1606.1 370.8" fill="none" stroke="#ececec" stroke-width="2.1"/>
<path d="M1606.9 358.6L1615.4 362.0L1625.7 348.0L1617.2 346.7" fill="none" stroke="#d6d6d6" stroke-width="5.8" stroke-linejoin="round"/>
<path d="M1613.6 360.8L1623.9 346.8" fill="none" stroke="#ececec" stroke-width="2.0"/>
<path d="M1623.5 336.7L1631.6 340.0L1641.2 327.0L1633.1 325.8" fill="none" stroke="#d6d6d6" stroke-width="5.6" stroke-linejoin="round"/>
<path d="M1630.0 338.9L1639.5 325.9" fill="none" stroke="#ececec" stroke-width="2.0"/>
<path d="M1395 628L1443 565 M1300 738L1367 668" stroke="#d8c3a6" stroke-width="2.5"/>
<path d="M917 942L917 441L1038 372L1129 385L1108 942" fill="none" stroke="#b0ffff" stroke-width="1.7"/>
</g>
</svg>
<svg class="a" style="left:182px;top:886px" width="36" height="36"><path d="M22 31V6" stroke="#2a2ad0" stroke-width="1.5"/><path d="M22 31L7 27" stroke="#20a020" stroke-width="1.5"/><path d="M22 31L33 22" stroke="#c02020" stroke-width="1.5"/><text x="20" y="7" font-size="7" fill="#2a2ad0" font-family="Liberation Sans">z</text><text x="3" y="27" font-size="7" fill="#20a020" font-family="Liberation Sans">y</text><text x="31" y="23" font-size="7" fill="#c02020" font-family="Liberation Sans">x</text></svg>
<svg class="a" style="left:1622px;top:155px" width="80" height="62"><ellipse cx="39.5" cy="45" rx="35" ry="13.5" fill="none" stroke="#c8c8c8" stroke-width="4" opacity="0.75"/><path d="M21 15L40 8L38 47L21 40Z" fill="#e6e0d8"/><path d="M40 8L58 15L56 41L38 47Z" fill="#8e8e8e"/><text x="23" y="34" font-size="7" fill="#555" font-family="Liberation Sans">LEFT</text></svg>
<div class="a" style="left:1636px;top:672px;width:72px;height:17px;background:#fff;border:1px solid #666;box-shadow:1px 1px 1px #222"></div>
<div class="t" style="left:1641px;top:675px;font-size:10.7px;color:#333;">WorkTop001</div>
<div class="a" style="left:1718px;top:126px;width:195px;height:866px;background:#454545"></div>
<div class="a" style="left:1719px;top:126px;width:1px;height:818px;background:#2f2f2f"></div>
<div class="a" style="left:1719px;top:126px;width:194px;height:28px;background:#464646;border-bottom:1px solid #3a3a3a"></div>
<div class="a" style="left:1754px;top:129px;width:1px;height:24px;background:#3a3a3a"></div>
<div class="a" style="left:1755px;top:129px;width:1px;height:24px;background:#4c4c4c"></div>
<div class="a" style="left:1785px;top:129px;width:1px;height:24px;background:#3a3a3a"></div>
<div class="a" style="left:1786px;top:129px;width:1px;height:24px;background:#4c4c4c"></div>
<div class="a" style="left:1817px;top:129px;width:1px;height:24px;background:#3a3a3a"></div>
<div class="a" style="left:1818px;top:129px;width:1px;height:24px;background:#4c4c4c"></div>
<div class="a" style="left:1849px;top:129px;width:1px;height:24px;background:#3a3a3a"></div>
<div class="a" style="left:1850px;top:129px;width:1px;height:24px;background:#4c4c4c"></div>
<div class="a" style="left:1881px;top:129px;width:1px;height:24px;background:#3a3a3a"></div>
<div class="a" style="left:1882px;top:129px;width:1px;height:24px;background:#4c4c4c"></div>
<svg class="a" style="left:1728px;top:129px" width="185" height="22"><path d="M10 3V19M2 11H18" stroke="#d8d8d8" stroke-width="2"/><g transform="translate(33,0)"><rect x="2" y="3" width="16" height="16" fill="none" stroke="#35c0c0" stroke-width="1.5" stroke-dasharray="3 2"/><path d="M5 16C5 9 9 6 15 6" fill="none" stroke="#d8d8d8" stroke-width="2"/></g><g transform="translate(64,0)"><rect x="3" y="2" width="14" height="6" fill="#d8d8d8"/><path d="M10 8V12M4 12H16M4 12V16M16 12V16" stroke="#35c0c0" stroke-width="1.5"/><rect x="2" y="15" width="4" height="4" fill="#35c0c0"/><rect x="14" y="15" width="4" height="4" fill="#35c0c0"/></g><g transform="translate(96,0)"><circle cx="12" cy="11" r="7" fill="#d8d8d8"/><path d="M4 5C1 9 1 13 4 17" fill="none" stroke="#35c0c0" stroke-width="1.5"/></g><g transform="translate(128,0)"><rect x="2" y="4" width="16" height="10" fill="#d8d8d8"/><path d="M7 18H13L10 15Z" fill="#d8d8d8"/></g><g transform="translate(160,0)"><path d="M4 18L13 9" stroke="#d8d8d8" stroke-width="3"/><circle cx="15" cy="6" r="4" fill="none" stroke="#d8d8d8" stroke-width="2.5"/></g></svg>
<div class="a" style="left:1728px;top:160px;width:165px;height:18px;background:#5a5a5a"></div>
<div class="t" style="left:1732px;top:163px;font-size:10.7px;color:#ddd;">WallDoor008</div>
<div class="a" style="left:1899px;top:160px;width:14px;height:18px;background:#f3d6ea"></div>
<div class="a" style="left:1728px;top:189px;width:185px;height:19px;background:#5a5a5a"></div>
<div class="t" style="left:1731px;top:193px;font-size:10.7px;color:#ddd;">Modifier List</div>
<svg class="a" style="left:1903px;top:196px" width="7" height="5"><path d="M0 0H7L3.5 5Z" fill="#ddd"/></svg>
<div class="a" style="left:1727px;top:213px;width:186px;height:179px;background:#444;border:1px solid #e8e8e8"></div>
<div class="a" style="left:1729px;top:215px;width:184px;height:17px;background:#5b88c8"></div>
<div class="t" style="left:1750px;top:218px;font-size:10.7px;color:#fff;">ChamferBox</div>
<svg class="a" style="left:1730px;top:398px" width="150" height="22"><path d="M4 17L9 12" stroke="#d8d8d8" stroke-width="1.5"/><path d="M7 8L13 14L15 12L12 9L14 7L11 4Z" fill="#d8d8d8"/><rect x="22" y="4" width="1.5" height="14" fill="#222"/></svg>
<div class="a" style="left:1764px;top:398px;width:22px;height:22px;background:#5a8bd6;border-radius:2px"></div>
<svg class="a" style="left:1768px;top:400px" width="14" height="18"><rect x="3.5" y="1.5" width="7" height="2" fill="#ddd"/><path d="M4.5 3H9.5V15C9.5 17 4.5 17 4.5 15Z" fill="#35c0c0" stroke="#ddd" stroke-width="1.2"/></svg>
<svg class="a" style="left:1792px;top:398px" width="100" height="22"><rect x="0" y="4" width="1.5" height="14" fill="#222"/><circle cx="14" cy="9" r="4" fill="none" stroke="#666" stroke-width="2"/><circle cx="18" cy="14" r="4" fill="none" stroke="#666" stroke-width="2"/><rect x="38" y="7" width="10" height="12" fill="none" stroke="#666" stroke-width="1.5"/><rect x="37" y="5" width="12" height="2" fill="#666"/><rect x="60" y="4" width="1.5" height="14" fill="#222"/><rect x="72" y="5" width="12" height="12" fill="#d8d8d8"/><path d="M74 8H78M74 11H78M74 14H78" stroke="#444"/><path d="M79 14L86 4" stroke="#f0a818" stroke-width="2.5"/></svg>
<div class="a" style="left:1733px;top:438px;width:175px;height:1px;background:#5a5a5a"></div>
<svg class="a" style="left:1813px;top:436px" width="14" height="4"><path d="M1 1H13M1 3H13" stroke="#aaa" stroke-dasharray="1 1"/></svg>
<div class="a" style="left:1727px;top:446px;width:182px;height:289px;background:#505050;border-radius:2px"></div>
<svg class="a" style="left:1734px;top:452px" width="7" height="5"><path d="M0 0H7L3.5 5Z" fill="#ccc"/></svg>
<div class="t" style="left:1746px;top:449px;font-size:12px;color:#f0f0f0;font-weight:bold">Parameters</div>
<svg class="a" style="left:1893px;top:451px" width="8" height="8"><g fill="#888"><rect x="0" y="0" width="1" height="1"/><rect x="3" y="0" width="1" height="1"/><rect x="6" y="0" width="1" height="1"/><rect x="0" y="3" width="1" height="1"/><rect x="3" y="3" width="1" height="1"/><rect x="6" y="3" width="1" height="1"/><rect x="0" y="6" width="1" height="1"/><rect x="3" y="6" width="1" height="1"/><rect x="6" y="6" width="1" height="1"/></g></svg>
<div class="t" style="left:1700px;width:112px;text-align:right;top:478px;font-size:10.7px;color:#e0e0e0">Length:</div>
<div class="a" style="left:1821px;top:477px;width:67px;height:14px;background:#5b5b5b;"></div>
<div class="t" style="left:1824px;top:478px;font-size:10.7px;color:#e6e6e6;letter-spacing:-0.2px">10,0cm</div>
<svg class="a" style="left:1879px;top:479px" width="7" height="11"><path d="M3.5 0L6.5 4H0.5Z M3.5 10L6.5 6H0.5Z" fill="#d8d8d8"/></svg>
<div class="t" style="left:1700px;width:112px;text-align:right;top:500px;font-size:10.7px;color:#e0e0e0">Width:</div>
<div class="a" style="left:1821px;top:499px;width:67px;height:14px;background:#5b5b5b;"></div>
<div class="t" style="left:1824px;top:500px;font-size:10.7px;color:#e6e6e6;letter-spacing:-0.2px">25,0cm</div>
<svg class="a" style="left:1879px;top:501px" width="7" height="11"><path d="M3.5 0L6.5 4H0.5Z M3.5 10L6.5 6H0.5Z" fill="#d8d8d8"/></svg>
<div class="t" style="left:1700px;width:112px;text-align:right;top:521px;font-size:10.7px;color:#e0e0e0">Height:</div>
<div class="a" style="left:1821px;top:520px;width:67px;height:14px;background:#5b5b5b;"></div>
<div class="t" style="left:1824px;top:521px;font-size:10.7px;color:#e6e6e6;letter-spacing:-0.2px">90,0cm</div>
<svg class="a" style="left:1879px;top:522px" width="7" height="11"><path d="M3.5 0L6.5 4H0.5Z M3.5 10L6.5 6H0.5Z" fill="#d8d8d8"/></svg>
<div class="t" style="left:1700px;width:112px;text-align:right;top:542px;font-size:10.7px;color:#e0e0e0">Fillet:</div>
<div class="a" style="left:1821px;top:541px;width:67px;height:14px;background:#5b5b5b;"></div>
<div class="t" style="left:1824px;top:542px;font-size:10.7px;color:#e6e6e6;letter-spacing:-0.2px">0,0cm</div>
<svg class="a" style="left:1879px;top:543px" width="7" height="11"><path d="M3.5 0L6.5 4H0.5Z M3.5 10L6.5 6H0.5Z" fill="#d8d8d8"/></svg>
<div class="t" style="left:1700px;width:112px;text-align:right;top:578px;font-size:10.7px;color:#e0e0e0">Length Segs:</div>
<div class="a" style="left:1821px;top:577px;width:67px;height:14px;background:#5b5b5b;"></div>
<div class="t" style="left:1824px;top:578px;font-size:10.7px;color:#e6e6e6;letter-spacing:-0.2px">1</div>
<svg class="a" style="left:1879px;top:579px" width="7" height="11"><path d="M3.5 0L6.5 4H0.5Z M3.5 10L6.5 6H0.5Z" fill="#d8d8d8"/></svg>
<div class="t" style="left:1700px;width:112px;text-align:right;top:599px;font-size:10.7px;color:#e0e0e0">Width Segs:</div>
<div class="a" style="left:1821px;top:598px;width:67px;height:14px;background:#5b5b5b;"></div>
<div class="t" style="left:1824px;top:599px;font-size:10.7px;color:#e6e6e6;letter-spacing:-0.2px">1</div>
<svg class="a" style="left:1879px;top:600px" width="7" height="11"><path d="M3.5 0L6.5 4H0.5Z M3.5 10L6.5 6H0.5Z" fill="#d8d8d8"/></svg>
<div class="t" style="left:1700px;width:112px;text-align:right;top:619px;font-size:10.7px;color:#e0e0e0">Height Segs:</div>
<div class="a" style="left:1821px;top:618px;width:67px;height:14px;background:#5b5b5b;"></div>
<div class="t" style="left:1824px;top:619px;font-size:10.7px;color:#e6e6e6;letter-spacing:-0.2px">1</div>
<svg class="a" style="left:1879px;top:620px" width="7" height="11"><path d="M3.5 0L6.5 4H0.5Z M3.5 10L6.5 6H0.5Z" fill="#d8d8d8"/></svg>
<div class="t" style="left:1700px;width:112px;text-align:right;top:640px;font-size:10.7px;color:#e0e0e0">Fillet Segs:</div>
<div class="a" style="left:1821px;top:639px;width:67px;height:14px;background:#5b5b5b;"></div>
<div class="t" style="left:1824px;top:640px;font-size:10.7px;color:#e6e6e6;letter-spacing:-0.2px">3</div>
<svg class="a" style="left:1879px;top:641px" width="7" height="11"><path d="M3.5 0L6.5 4H0.5Z M3.5 10L6.5 6H0.5Z" fill="#d8d8d8"/></svg>
<div class="a" style="left:1744px;top:668px;width:10px;height:10px;background:#555"></div>
<svg class="a" style="left:1744px;top:667px" width="11" height="11"><path d="M2 5.5L4.5 8L9.5 1.5" fill="none" stroke="#e0e0e0" stroke-width="1.6"/></svg>
<div class="t" style="left:1756px;top:667px;font-size:10.7px;color:#e0e0e0;">Smooth</div>
<div class="a" style="left:1744px;top:692px;width:10px;height:10px;background:#555"></div>
<svg class="a" style="left:1744px;top:691px" width="11" height="11"><path d="M2 5.5L4.5 8L9.5 1.5" fill="none" stroke="#e0e0e0" stroke-width="1.6"/></svg>
<div class="t" style="left:1756px;top:691px;font-size:10.7px;color:#e0e0e0;">Generate Mapping Coords.</div>
<div class="a" style="left:1744px;top:713px;width:10px;height:10px;background:#555"></div>
<div class="t" style="left:1756px;top:712px;font-size:10.7px;color:#e0e0e0;">Real-World Map Size</div>
<div class="a" style="left:178px;top:944px;width:1735px;height:21px;background:#454545"></div>
<div class="a" style="left:179px;top:946px;width:15px;height:16px;background:#575757;border-radius:2px"></div>
<div class="t" style="left:182px;top:948px;font-size:12px;color:#bbb;">&lt;</div>
<div class="a" style="left:195px;top:946px;width:123px;height:16px;background:#5a5a5a;border-radius:2px"></div>
<div class="t" style="left:238px;top:948px;font-size:10.7px;color:#ddd;">0 / 100</div>
<div class="a" style="left:320px;top:946px;width:14px;height:16px;background:#575757;border-radius:2px"></div>
<div class="t" style="left:323px;top:948px;font-size:12px;color:#bbb;">&gt;</div>
<div class="a" style="left:178px;top:964px;width:1493px;height:25px;background:#2d2d2d;border-top:1px solid #111"></div>
<div class="a" style="left:1671px;top:964px;width:47px;height:2px;background:#111"></div>
<div class="a" style="left:1716px;top:962px;width:2px;height:2px;background:#eee"></div>
<div class="a" style="left:178px;top:964px;width:50px;height:25px;background:#333;border-top:1px solid #111"></div>
<svg class="a" style="left:190px;top:969px" width="20" height="16"><path d="M2 2H4M2 5H4M2 8H4M2 11H4" stroke="#bbb"/><path d="M6 12C8 2 10 2 11 7S15 12 17 3" fill="none" stroke="#35c0c0" stroke-width="1.6"/></svg>
<svg class="a" style="left:178px;top:965px" width="1545" height="25"><rect x="55" y="1" width="1" height="12" fill="#a8a8a8"/><rect x="69" y="1" width="1" height="10" fill="#a8a8a8"/><rect x="84" y="1" width="1" height="10" fill="#a8a8a8"/><rect x="98" y="1" width="1" height="10" fill="#a8a8a8"/><rect x="112" y="1" width="1" height="10" fill="#a8a8a8"/><rect x="126" y="1" width="1" height="12" fill="#a8a8a8"/><text x="126.4" y="22" font-family="Liberation Sans" font-size="10.7" fill="#c5c5c5" text-anchor="middle">5</text><rect x="141" y="1" width="1" height="10" fill="#a8a8a8"/><rect x="155" y="1" width="1" height="10" fill="#a8a8a8"/><rect x="169" y="1" width="1" height="10" fill="#a8a8a8"/><rect x="184" y="1" width="1" height="10" fill="#a8a8a8"/><rect x="198" y="1" width="1" height="12" fill="#a8a8a8"/><text x="197.8" y="22" font-family="Liberation Sans" font-size="10.7" fill="#c5c5c5" text-anchor="middle">10</text><rect x="212" y="1" width="1" height="10" fill="#a8a8a8"/><rect x="226" y="1" width="1" height="10" fill="#a8a8a8"/><rect x="241" y="1" width="1" height="10" fill="#a8a8a8"/><rect x="255" y="1" width="1" height="10" fill="#a8a8a8"/><rect x="269" y="1" width="1" height="12" fill="#a8a8a8"/><text x="269.2" y="22" font-family="Liberation Sans" font-size="10.7" fill="#c5c5c5" text-anchor="middle">15</text><rect x="283" y="1" width="1" height="10" fill="#a8a8a8"/><rect x="298" y="1" width="1" height="10" fill="#a8a8a8"/><rect x="312" y="1" width="1" height="10" fill="#a8a8a8"/><rect x="326" y="1" width="1" height="10" fill="#a8a8a8"/><rect x="341" y="1" width="1" height="12" fill="#a8a8a8"/><text x="340.6" y="22" font-family="Liberation Sans" font-size="10.7" fill="#c5c5c5" text-anchor="middle">20</text><rect x="355" y="1" width="1" height="10" fill="#a8a8a8"/><rect x="369" y="1" width="1" height="10" fill="#a8a8a8"/><rect x="383" y="1" width="1" height="10" fill="#a8a8a8"/><rect x="398" y="1" width="1" height="10" fill="#a8a8a8"/><rect x="412" y="1" width="1" height="12" fill="#a8a8a8"/><text x="412.0" y="22" font-family="Liberation Sans" font-size="10.7" fill="#c5c5c5" text-anchor="middle">25</text><rect x="426" y="1" width="1" height="10" fill="#a8a8a8"/><rect x="441" y="1" width="1" height="10" fill="#a8a8a8"/><rect x="455" y="1" width="1" height="10" fill="#a8a8a8"/><rect x="469" y="1" width="1" height="10" fill="#a8a8a8"/><rect x="483" y="1" width="1" height="12" fill="#a8a8a8"/><text x="483.4" y="22" font-family="Liberation Sans" font-size="10.7" fill="#c5c5c5" text-anchor="middle">30</text><rect x="498" y="1" width="1" height="10" fill="#a8a8a8"/><rect x="512" y="1" width="1" height="10" fill="#a8a8a8"/><rect x="526" y="1" width="1" height="10" fill="#a8a8a8"/><rect x="541" y="1" width="1" height="10" fill="#a8a8a8"/><rect x="555" y="1" width="1" height="12" fill="#a8a8a8"/><text x="554.8" y="22" font-family="Liberation Sans" font-size="10.7" fill="#c5c5c5" text-anchor="middle">35</text><rect x="569" y="1" width="1" height="10" fill="#a8a8a8"/><rect x="583" y="1" width="1" height="10" fill="#a8a8a8"/><rect x="598" y="1" width="1" height="10" fill="#a8a8a8"/><rect x="612" y="1" width="1" height="10" fill="#a8a8a8"/><rect x="626" y="1" width="1" height="12" fill="#a8a8a8"/><text x="626.2" y="22" font-family="Liberation Sans" font-size="10.7" fill="#c5c5c5" text-anchor="middle">40</text><rect x="640" y="1" width="1" height="10" fill="#a8a8a8"/><rect x="655" y="1" width="1" height="10" fill="#a8a8a8"/><rect x="669" y="1" width="1" height="10" fill="#a8a8a8"/><rect x="683" y="1" width="1" height="10" fill="#a8a8a8"/><rect x="698" y="1" width="1" height="12" fill="#a8a8a8"/><text x="697.6" y="22" font-family="Liberation Sans" font-size="10.7" fill="#c5c5c5" text-anchor="middle">45</text><rect x="712" y="1" width="1" height="10" fill="#a8a8a8"/><rect x="726" y="1" width="1" height="10" fill="#a8a8a8"/><rect x="740" y="1" width="1" height="10" fill="#a8a8a8"/><rect x="755" y="1" width="1" height="10" fill="#a8a8a8"/><rect x="769" y="1" width="1" height="12" fill="#a8a8a8"/><text x="769.0" y="22" font-family="Liberation Sans" font-size="10.7" fill="#c5c5c5" text-anchor="middle">50</text><rect x="783" y="1" width="1" height="10" fill="#a8a8a8"/><rect x="798" y="1" width="1" height="10" fill="#a8a8a8"/><rect x="812" y="1" width="1" height="10" fill="#a8a8a8"/><rect x="826" y="1" width="1" height="10" fill="#a8a8a8"/><rect x="840" y="1" width="1" height="12" fill="#a8a8a8"/><text x="840.4" y="22" font-family="Liberation Sans" font-size="10.7" fill="#c5c5c5" text-anchor="middle">55</text><rect x="855" y="1" width="1" height="10" fill="#a8a8a8"/><rect x="869" y="1" width="1" height="10" fill="#a8a8a8"/><rect x="883" y="1" width="1" height="10" fill="#a8a8a8"/><rect x="898" y="1" width="1" height="10" fill="#a8a8a8"/><rect x="912" y="1" width="1" height="12" fill="#a8a8a8"/><text x="911.8" y="22" font-family="Liberation Sans" font-size="10.7" fill="#c5c5c5" text-anchor="middle">60</text><rect x="926" y="1" width="1" height="10" fill="#a8a8a8"/><rect x="940" y="1" width="1" height="10" fill="#a8a8a8"/><rect x="955" y="1" width="1" height="10" fill="#a8a8a8"/><rect x="969" y="1" width="1" height="10" fill="#a8a8a8"/><rect x="983" y="1" width="1" height="12" fill="#a8a8a8"/><text x="983.2" y="22" font-family="Liberation Sans" font-size="10.7" fill="#c5c5c5" text-anchor="middle">65</text><rect x="997" y="1" width="1" height="10" fill="#a8a8a8"/><rect x="1012" y="1" width="1" height="10" fill="#a8a8a8"/><rect x="1026" y="1" width="1" height="10" fill="#a8a8a8"/><rect x="1040" y="1" width="1" height="10" fill="#a8a8a8"/><rect x="1055" y="1" width="1" height="12" fill="#a8a8a8"/><text x="1054.6" y="22" font-family="Liberation Sans" font-size="10.7" fill="#c5c5c5" text-anchor="middle">70</text><rect x="1069" y="1" width="1" height="10" fill="#a8a8a8"/><rect x="1083" y="1" width="1" height="10" fill="#a8a8a8"/><rect x="1097" y="1" width="1" height="10" fill="#a8a8a8"/><rect x="1112" y="1" width="1" height="10" fill="#a8a8a8"/><rect x="1126" y="1" width="1" height="12" fill="#a8a8a8"/><text x="1126.0" y="22" font-family="Liberation Sans" font-size="10.7" fill="#c5c5c5" text-anchor="middle">75</text><rect x="1140" y="1" width="1" height="10" fill="#a8a8a8"/><rect x="1155" y="1" width="1" height="10" fill="#a8a8a8"/><rect x="1169" y="1" width="1" height="10" fill="#a8a8a8"/><rect x="1183" y="1" width="1" height="10" fill="#a8a8a8"/><rect x="1197" y="1" width="1" height="12" fill="#a8a8a8"/><text x="1197.4" y="22" font-family="Liberation Sans" font-size="10.7" fill="#c5c5c5" text-anchor="middle">80</text><rect x="1212" y="1" width="1" height="10" fill="#a8a8a8"/><rect x="1226" y="1" width="1" height="10" fill="#a8a8a8"/><rect x="1240" y="1" width="1" height="10" fill="#a8a8a8"/><rect x="1255" y="1" width="1" height="10" fill="#a8a8a8"/><rect x="1269" y="1" width="1" height="12" fill="#a8a8a8"/><text x="1268.8" y="22" font-family="Liberation Sans" font-size="10.7" fill="#c5c5c5" text-anchor="middle">85</text><rect x="1283" y="1" width="1" height="10" fill="#a8a8a8"/><rect x="1297" y="1" width="1" height="10" fill="#a8a8a8"/><rect x="1312" y="1" width="1" height="10" fill="#a8a8a8"/><rect x="1326" y="1" width="1" height="10" fill="#a8a8a8"/><rect x="1340" y="1" width="1" height="12" fill="#a8a8a8"/><text x="1340.2" y="22" font-family="Liberation Sans" font-size="10.7" fill="#c5c5c5" text-anchor="middle">90</text><rect x="1354" y="1" width="1" height="10" fill="#a8a8a8"/><rect x="1369" y="1" width="1" height="10" fill="#a8a8a8"/><rect x="1383" y="1" width="1" height="10" fill="#a8a8a8"/><rect x="1397" y="1" width="1" height="10" fill="#a8a8a8"/><rect x="1412" y="1" width="1" height="12" fill="#a8a8a8"/><text x="1411.6" y="22" font-family="Liberation Sans" font-size="10.7" fill="#c5c5c5" text-anchor="middle">95</text><rect x="1426" y="1" width="1" height="10" fill="#a8a8a8"/><rect x="1440" y="1" width="1" height="10" fill="#a8a8a8"/><rect x="1454" y="1" width="1" height="10" fill="#a8a8a8"/><rect x="1469" y="1" width="1" height="10" fill="#a8a8a8"/><rect x="1483" y="1" width="1" height="12" fill="#a8a8a8"/><text x="1483.0" y="22" font-family="Liberation Sans" font-size="10.7" fill="#c5c5c5" text-anchor="middle">100</text></svg>
<div class="a" style="left:228px;top:966px;width:10px;height:23px;background:#b5a83a;border:1px solid #8a7f20"></div>
<div class="t" style="left:230px;top:975px;font-size:10.7px;color:#e6d860;">0</div>
<div class="a" style="left:1720px;top:944px;width:193px;height:46px;background:#454545"></div>
<div class="a" style="left:0px;top:989px;width:1913px;height:51px;background:#454545;border-top:1px solid #333"></div>
<div class="a" style="left:3px;top:992px;width:98px;height:23px;background:#fff"></div>
<div class="a" style="left:5px;top:994px;width:94px;height:19px;background:#dcc4c6"></div>
<div class="a" style="left:3px;top:1015px;width:98px;height:23px;background:#fff;border:1px solid #999"></div>
<div class="t" style="left:8px;top:1020px;font-family:'Liberation Mono',monospace;font-size:12px;color:#111">Welcome to M</div>
<div class="a" style="left:106px;top:990px;width:1px;height:50px;background:#2e2e2e"></div>
<div class="t" style="left:111px;top:999px;font-size:10.7px;color:#e0e0e0;">1 Object Selected</div>
<div class="t" style="left:111px;top:1024px;font-size:10.7px;color:#e0e0e0;">Click or click-and-drag to select objects</div>
<svg class="a" style="left:1049px;top:996px" width="80" height="18"><path d="M2 5V2H5M13 2H16V5M16 13V16H13M5 16H2V13" fill="none" stroke="#ddd" stroke-width="1.5"/><rect x="6" y="6" width="6" height="6" fill="#35c0c0"/><path d="M32 7V5C32 2 38 2 38 5V7" fill="none" stroke="#ddd" stroke-width="1.8"/><rect x="30" y="7" width="10" height="9" fill="#ddd"/><rect x="34" y="10" width="2" height="3" fill="#444"/><rect x="56" y="3" width="14" height="13" fill="none" stroke="#ddd" stroke-width="1.5"/><path d="M63 4L69 9.5L63 15L57 9.5Z" fill="none" stroke="#ddd" stroke-width="1.5"/><circle cx="63" cy="9.5" r="2" fill="#ddd"/></svg>
<div class="t" style="left:1128px;top:999px;font-size:10.7px;color:#e0e0e0;">X:</div>
<div class="a" style="left:1141px;top:997px;width:57px;height:16px;background:#4d4d4d"></div>
<div class="t" style="left:1144px;top:1000px;font-size:10.7px;color:#8a8a8a;">119,112cm</div>
<div class="t" style="left:1212px;top:999px;font-size:10.7px;color:#e0e0e0;">Y:</div>
<div class="a" style="left:1224px;top:997px;width:57px;height:16px;background:#4d4d4d"></div>
<div class="t" style="left:1227px;top:1000px;font-size:10.7px;color:#8a8a8a;">-2,24cm</div>
<div class="t" style="left:1295px;top:999px;font-size:10.7px;color:#e0e0e0;">Z:</div>
<div class="a" style="left:1308px;top:997px;width:57px;height:16px;background:#4d4d4d"></div>
<div class="t" style="left:1311px;top:1000px;font-size:10.7px;color:#8a8a8a;">0,0cm</div>
<div class="t" style="left:1380px;top:998px;font-size:10.7px;color:#f0f0f0;">Grid = 1000,0cm</div>
<div class="a" style="left:1354px;top:1019px;width:22px;height:19px;background:#3e6fb0;border-radius:2px"></div>
<svg class="a" style="left:1357px;top:1021px" width="16" height="15"><path d="M8 1L14 4V11L8 14L2 11V4Z M2 4L8 7L14 4M8 7V14" fill="none" stroke="#e8e8e8" stroke-width="1.2"/></svg>
<div class="t" style="left:1381px;top:1024px;font-size:10.7px;color:#e0e0e0;">Add Time Tag</div>
<div class="a" style="left:1484px;top:994px;width:40px;height:41px;background:#555;border:1px solid #4a4a4a;border-radius:3px"></div>
<svg class="a" style="left:1489px;top:1000px" width="30" height="30"><path d="M13 2V26M2 14H24" stroke="#e8e8e8" stroke-width="5"/><circle cx="21" cy="21" r="3.5" fill="none" stroke="#35c0c0" stroke-width="2"/><path d="M19 23L12 29" stroke="#35c0c0" stroke-width="2"/></svg>
<div class="a" style="left:1530px;top:995px;width:45px;height:19px;background:#5a5a5a;border-radius:2px"></div>
<div class="t" style="left:1532px;top:998px;font-size:10.7px;color:#ddd;">Auto Key</div>
<div class="a" style="left:1530px;top:1017px;width:45px;height:19px;background:#5a5a5a;border-radius:2px"></div>
<div class="t" style="left:1533px;top:1020px;font-size:10.7px;color:#ddd;">Set Key</div>
<div class="a" style="left:1582px;top:995px;width:112px;height:19px;background:#575757"></div>
<div class="t" style="left:1587px;top:998px;font-size:10.7px;color:#ddd;">Selected</div>
<svg class="a" style="left:1681px;top:1002px" width="7" height="5"><path d="M0 0H7L3.5 5Z" fill="#ddd"/></svg>
<svg class="a" style="left:1583px;top:1017px" width="22" height="19"><path d="M4 18V6M4 6H15M15 6V12" fill="none" stroke="#35c0c0" stroke-width="2"/><rect x="2" y="2" width="4" height="4" fill="#ddd"/><rect x="13" y="2" width="4" height="4" fill="#ddd"/><path d="M17 18H21V14Z" fill="#ddd"/></svg>
<div class="a" style="left:1607px;top:1017px;width:87px;height:19px;background:#5a5a5a;border-radius:2px"></div>
<div class="t" style="left:1619px;top:1020px;font-size:10.7px;color:#ddd;">Key Filters...</div>
<svg class="a" style="left:1702px;top:995px" width="211" height="20"><g fill="#ddd"><rect x="3" y="4" width="2" height="11"/><path d="M13 4L6 9.5L13 15Z M18 4L11 9.5L18 15Z"/><rect x="31" y="4" width="2" height="11"/><path d="M41 4L34 9.5L41 15Z"/><rect x="43" y="4" width="2" height="11"/><path d="M53 2L66 10L53 18Z"/><path d="M65 15H69V11Z"/><rect x="75" y="4" width="2" height="11"/><path d="M79 4L86 9.5L79 15Z"/><rect x="87" y="4" width="2" height="11"/><path d="M100 4L107 9.5L100 15Z M105 4L112 9.5L105 15Z"/><rect x="112" y="4" width="2" height="11"/></g><circle cx="137" cy="8" r="5" fill="none" stroke="#ddd" stroke-width="2"/><path d="M133 12L128 17" stroke="#ddd" stroke-width="2.5"/><g transform="translate(150,0)"><circle cx="10" cy="7" r="4.5" fill="none" stroke="#ddd" stroke-width="2"/><path d="M7 11L2 16" stroke="#ddd" stroke-width="2.5"/><rect x="11" y="2" width="6" height="6" fill="#35c0c0"/></g><g transform="translate(172,0)"><path d="M2 5V2H5M14 2H17V5M17 14V17H14M5 17H2V14" fill="none" stroke="#ddd" stroke-width="1.5"/><path d="M9.5 4L15 7V12L9.5 15L4 12V7Z" fill="#35c0c0"/></g><g transform="translate(194,0)"><path d="M3 10L10 4L17 10L10 16Z" fill="none" stroke="#ddd" stroke-width="1.5"/><path d="M10 4V16M3 10H17" stroke="#35c0c0" stroke-width="1.5"/></g></svg>
<div class="a" style="left:1727px;top:1017px;width:69px;height:19px;background:#575757"></div>
<div class="t" style="left:1731px;top:1020px;font-size:10.7px;color:#ddd;">0</div>
<svg class="a" style="left:1786px;top:1021px" width="7" height="11"><path d="M3.5 0L6.5 4H0.5Z M3.5 10L6.5 6H0.5Z" fill="#ddd"/></svg>
<svg class="a" style="left:1702px;top:1017px" width="211" height="20"><path d="M3 10L8 6V14Z M18 10L13 6V14Z" fill="#ddd"/><g transform="translate(98,0)"><circle cx="8" cy="8" r="5" fill="none" stroke="#ddd" stroke-width="2"/><circle cx="12" cy="12" r="4" fill="#f0a818"/></g><g transform="translate(128,0)"><path d="M3 3L14 10L3 17" fill="none" stroke="#ddd" stroke-width="2"/></g><g transform="translate(150,0)"><path d="M5 17V8C5 6 8 6 8 8V5C8 3 11 3 11 5V6C11 4 14 4 14 6V8C14 6 17 6 17 8V13C17 16 14 18 11 18Z" fill="#ddd"/></g><g transform="translate(172,0)"><path d="M3 12C3 6 12 3 17 5L14 9C10 8 7 10 7 14Z" fill="#ddd"/><rect x="10" y="8" width="6" height="6" fill="#35c0c0"/></g><g transform="translate(194,0)"><rect x="1" y="1" width="16" height="16" fill="none" stroke="#ddd" stroke-width="1.5"/><path d="M4 14L14 4M9 4H14V9" fill="none" stroke="#ddd" stroke-width="2"/></g></svg>
<div class="a" style="left:37px;top:101px;width:796px;height:636px;background:rgba(0,0,0,0.35);filter:blur(3px)"></div>
<div class="a" style="left:35px;top:99px;width:796px;height:635px;background:#434343;border-right:1px solid #3a3a3a;border-bottom:1px solid #3a3a3a"></div>
<div class="a" style="left:826px;top:129px;width:2px;height:602px;background:#4a4a4a"></div>
<div class="a" style="left:39px;top:728px;width:789px;height:2px;background:#4a4a4a"></div>
<div class="a" style="left:35px;top:99px;width:796px;height:30px;background:#fff"></div>
<div class="a" style="left:43px;top:105px;width:15px;height:16px;background:linear-gradient(#d7eded,#b4dcdc)"></div>
<div class="t" style="left:46px;top:105px;font-size:12px;font-weight:bold;color:#1a9a9a">3</div>
<div class="t" style="left:64px;top:107px;font-size:12px;color:#8a8a8a;">Cabinet Creator v1.0</div>
<svg class="a" style="left:700px;top:106px" width="120" height="16"><path d="M11 7.5H22" stroke="#777"/><rect x="56.5" y="2.5" width="10" height="10" fill="none" stroke="#ececec"/><path d="M102 2L113 13M113 2L102 13" stroke="#555" stroke-width="1.1"/></svg>
<div class="a" style="left:35px;top:129px;width:796px;height:5px;background:#3a3a3a"></div>
<div class="a" style="left:39px;top:134px;width:790px;height:109px;background:#505050;border-bottom:1px solid #3a3a3a;border-radius:2px"></div>
<svg class="a" style="left:45px;top:141px" width="7" height="5"><path d="M0 0H7L3.5 5Z" fill="#bbb"/></svg>
<div class="t" style="left:59px;top:138px;font-size:11.8px;color:#f2f2f2;font-weight:bold">General</div>
<svg class="a" style="left:813px;top:139px" width="8" height="8"><g fill="#8a8a8a"><rect x="0" y="0" width="1" height="1"/><rect x="3" y="0" width="1" height="1"/><rect x="6" y="0" width="1" height="1"/><rect x="0" y="3" width="1" height="1"/><rect x="3" y="3" width="1" height="1"/><rect x="6" y="3" width="1" height="1"/><rect x="0" y="6" width="1" height="1"/><rect x="3" y="6" width="1" height="1"/><rect x="6" y="6" width="1" height="1"/></g></svg>
<div class="t" style="left:53px;top:163px;font-size:10.7px;color:#e0e0e0;">Select Type</div>
<div class="a" style="left:54px;top:181px;width:102px;height:18px;background:#5a5a5a"></div>
<div class="t" style="left:59px;top:185px;font-size:10.7px;color:#e0e0e0;">Floor Cabinets</div>
<svg class="a" style="left:142px;top:188px" width="7" height="5"><path d="M0 0H7L3.5 5Z" fill="#eee"/></svg>
<div class="a" style="left:170px;top:164px;width:10px;height:10px;background:#5e5e5e;box-shadow:inset 0 0 0 1px #484848"></div>
<svg class="a" style="left:170px;top:163px" width="10" height="10"><path d="M1.5 5L4 7.5L8.5 1.5" fill="none" stroke="#e8e8e8" stroke-width="1.5"/></svg>
<div class="t" style="left:183px;top:163px;font-size:10.7px;color:#e6e6e6;">WorkTop</div>
<div class="a" style="left:170px;top:179px;width:59px;height:14px;background:#5b5b5b;"></div>
<div class="t" style="left:173px;top:180px;font-size:10.7px;color:#e6e6e6;letter-spacing:-0.2px">4,0cm</div>
<svg class="a" style="left:220px;top:181px" width="7" height="11"><path d="M3.5 0L6.5 4H0.5Z M3.5 10L6.5 6H0.5Z" fill="#d8d8d8"/></svg>
<div class="a" style="left:247px;top:164px;width:10px;height:10px;background:#5e5e5e;box-shadow:inset 0 0 0 1px #484848"></div>
<div class="t" style="left:259px;top:163px;font-size:10.7px;color:#e6e6e6;">Sink</div>
<div class="a" style="left:247px;top:180px;width:10px;height:10px;background:#555;box-shadow:inset 0 0 0 1px #484848"></div>
<svg class="a" style="left:247px;top:179px" width="10" height="10"><path d="M1.5 5L4 7.5L8.5 1.5" fill="none" stroke="#888" stroke-width="1.5"/></svg>
<div class="t" style="left:259px;top:179px;font-size:10.7px;color:#8a8a8a;">Square</div>
<div class="a" style="left:247px;top:196px;width:10px;height:10px;background:#555;box-shadow:inset 0 0 0 1px #484848"></div>
<div class="t" style="left:259px;top:195px;font-size:10.7px;color:#8a8a8a;">Round</div>
<div class="a" style="left:247px;top:210px;width:50px;height:14px;background:#555555;"></div>
<div class="t" style="left:250px;top:211px;font-size:10.7px;color:#8a8a8a;letter-spacing:-0.2px">1,0</div>
<svg class="a" style="left:288px;top:212px" width="7" height="11"><path d="M3.5 0L6.5 4H0.5Z M3.5 10L6.5 6H0.5Z" fill="#9a9a9a"/></svg>
<div class="a" style="left:311px;top:164px;width:10px;height:10px;background:#5e5e5e;box-shadow:inset 0 0 0 1px #484848"></div>
<div class="t" style="left:323px;top:163px;font-size:10.7px;color:#e6e6e6;">Handles</div>
<div class="a" style="left:311px;top:180px;width:10px;height:10px;background:#555;box-shadow:inset 0 0 0 1px #484848"></div>
<svg class="a" style="left:311px;top:179px" width="10" height="10"><path d="M1.5 5L4 7.5L8.5 1.5" fill="none" stroke="#888" stroke-width="1.5"/></svg>
<div class="t" style="left:323px;top:179px;font-size:10.7px;color:#8a8a8a;">Square Handles</div>
<div class="a" style="left:311px;top:196px;width:10px;height:10px;background:#555;box-shadow:inset 0 0 0 1px #484848"></div>
<div class="t" style="left:323px;top:195px;font-size:10.7px;color:#8a8a8a;">Round Handles</div>
<div class="a" style="left:411px;top:164px;width:10px;height:10px;background:#5e5e5e;box-shadow:inset 0 0 0 1px #484848"></div>
<svg class="a" style="left:411px;top:163px" width="10" height="10"><path d="M1.5 5L4 7.5L8.5 1.5" fill="none" stroke="#e8e8e8" stroke-width="1.5"/></svg>
<div class="t" style="left:423px;top:163px;font-size:10.7px;color:#e6e6e6;">Group Cab Elements</div>
<div class="a" style="left:411px;top:180px;width:10px;height:10px;background:#5e5e5e;box-shadow:inset 0 0 0 1px #484848"></div>
<div class="t" style="left:423px;top:179px;font-size:10.7px;color:#e6e6e6;">MRay Material</div>
<div class="t" style="left:542px;top:162px;font-size:10.7px;color:#e6e6e6;">No.of Rnd Cabs</div>
<div class="a" style="left:622px;top:162px;width:42px;height:14px;background:#5b5b5b;"></div>
<div class="t" style="left:625px;top:163px;font-size:10.7px;color:#e6e6e6;letter-spacing:-0.2px">4,0</div>
<svg class="a" style="left:655px;top:164px" width="7" height="11"><path d="M3.5 0L6.5 4H0.5Z M3.5 10L6.5 6H0.5Z" fill="#d8d8d8"/></svg>
<div class="btn" style="left:542px;top:182px;width:122px;height:38px;line-height:36px;font-size:10.7px">Random Create</div>
<div class="btn" style="left:676px;top:162px;width:138px;height:58px;line-height:56px;font-size:10.7px">Create All</div>
<div class="a" style="left:53px;top:229px;width:762px;height:8px;background:#3a3a3a;border-top:3px solid #0a0a0a;border-left:2px solid #0a0a0a"></div>
<div class="a" style="left:39px;top:247px;width:790px;height:329px;background:#505050;border-bottom:1px solid #3a3a3a;border-radius:2px"></div>
<svg class="a" style="left:45px;top:254px" width="7" height="5"><path d="M0 0H7L3.5 5Z" fill="#bbb"/></svg>
<div class="t" style="left:59px;top:251px;font-size:11.8px;color:#f2f2f2;font-weight:bold">Floor Units</div>
<svg class="a" style="left:813px;top:252px" width="8" height="8"><g fill="#8a8a8a"><rect x="0" y="0" width="1" height="1"/><rect x="3" y="0" width="1" height="1"/><rect x="6" y="0" width="1" height="1"/><rect x="0" y="3" width="1" height="1"/><rect x="3" y="3" width="1" height="1"/><rect x="6" y="3" width="1" height="1"/><rect x="0" y="6" width="1" height="1"/><rect x="3" y="6" width="1" height="1"/><rect x="6" y="6" width="1" height="1"/></g></svg>
<div class="t" style="left:52px;top:279px;font-size:10.7px;color:#e6e6e6;">How Many Cabinets?</div>
<div class="a" style="left:166px;top:275px;width:38px;height:19px;background:#555"></div>
<div class="t" style="left:172px;top:279px;font-size:10.7px;color:#ddd;">1</div>
<svg class="a" style="left:191px;top:281px" width="7" height="5"><path d="M0 0H7L3.5 5Z" fill="#eee"/></svg>
<div class="a" style="left:211px;top:275px;width:22px;height:21px;background:#4b6184"></div>
<div class="t" style="left:218px;top:280px;font-size:10.7px;color:#8aa0c0;">1</div>
<div class="btn" style="left:736px;top:275px;width:78px;height:24px;line-height:22px;font-size:10.7px">Create</div>
<div class="a" style="left:53px;top:312px;width:119px;height:257px;border:1px solid #3a3a3a;border-radius:3px;box-shadow:inset 1px 1px 0 #555"></div>
<div class="t" style="left:56px;top:307px;font-size:10.7px;color:#e6e6e6;background:#505050;padding:0 2px">Floor Unit One</div>
<div class="t" style="left:33px;width:69px;text-align:right;top:331px;font-size:10.7px;color:#e6e6e6">Width</div>
<div class="a" style="left:105px;top:331px;width:62px;height:14px;background:#5b5b5b;"></div>
<div class="t" style="left:108px;top:332px;font-size:10.7px;color:#e6e6e6;letter-spacing:-0.2px">80,0cm</div>
<svg class="a" style="left:158px;top:333px" width="7" height="11"><path d="M3.5 0L6.5 4H0.5Z M3.5 10L6.5 6H0.5Z" fill="#d8d8d8"/></svg>
<div class="t" style="left:33px;width:69px;text-align:right;top:351px;font-size:10.7px;color:#e6e6e6">Height</div>
<div class="a" style="left:105px;top:351px;width:62px;height:14px;background:#5b5b5b;"></div>
<div class="t" style="left:108px;top:352px;font-size:10.7px;color:#e6e6e6;letter-spacing:-0.2px">82,0cm</div>
<svg class="a" style="left:158px;top:353px" width="7" height="11"><path d="M3.5 0L6.5 4H0.5Z M3.5 10L6.5 6H0.5Z" fill="#d8d8d8"/></svg>
<div class="t" style="left:33px;width:69px;text-align:right;top:371px;font-size:10.7px;color:#e6e6e6">Depth</div>
<div class="a" style="left:105px;top:371px;width:62px;height:14px;background:#5b5b5b;"></div>
<div class="t" style="left:108px;top:372px;font-size:10.7px;color:#e6e6e6;letter-spacing:-0.2px">56,0cm</div>
<svg class="a" style="left:158px;top:373px" width="7" height="11"><path d="M3.5 0L6.5 4H0.5Z M3.5 10L6.5 6H0.5Z" fill="#d8d8d8"/></svg>
<div class="t" style="left:33px;width:69px;text-align:right;top:391px;font-size:10.7px;color:#e6e6e6">Thickness</div>
<div class="a" style="left:105px;top:391px;width:62px;height:14px;background:#5b5b5b;"></div>
<div class="t" style="left:108px;top:392px;font-size:10.7px;color:#e6e6e6;letter-spacing:-0.2px">1,0cm</div>
<svg class="a" style="left:158px;top:393px" width="7" height="11"><path d="M3.5 0L6.5 4H0.5Z M3.5 10L6.5 6H0.5Z" fill="#d8d8d8"/></svg>
<div class="t" style="left:33px;width:69px;text-align:right;top:411px;font-size:10.7px;color:#e6e6e6">Mask</div>
<div class="a" style="left:105px;top:411px;width:62px;height:14px;background:#5b5b5b;"></div>
<div class="t" style="left:108px;top:412px;font-size:10.7px;color:#e6e6e6;letter-spacing:-0.2px">10,0cm</div>
<svg class="a" style="left:158px;top:413px" width="7" height="11"><path d="M3.5 0L6.5 4H0.5Z M3.5 10L6.5 6H0.5Z" fill="#d8d8d8"/></svg>
<div class="t" style="left:33px;width:69px;text-align:right;top:431px;font-size:10.7px;color:#e6e6e6">Shelves</div>
<div class="a" style="left:105px;top:431px;width:62px;height:14px;background:#5b5b5b;"></div>
<div class="t" style="left:108px;top:432px;font-size:10.7px;color:#e6e6e6;letter-spacing:-0.2px">1,0</div>
<svg class="a" style="left:158px;top:433px" width="7" height="11"><path d="M3.5 0L6.5 4H0.5Z M3.5 10L6.5 6H0.5Z" fill="#d8d8d8"/></svg>
<div class="t" style="left:60px;top:451px;font-size:11px;color:#e6e6e6;">Front Panels</div>
<div class="a" style="left:62px;top:468px;width:11px;height:11px;border-radius:50%;background:#484848;box-shadow:inset 0 0 0 1px #5a5a5a"></div>
<div class="t" style="left:79px;top:467px;font-size:11px;color:#e6e6e6;">Open</div>
<div class="a" style="left:62px;top:483px;width:11px;height:11px;border-radius:50%;background:#484848;box-shadow:inset 0 0 0 1px #5a5a5a"></div>
<div class="t" style="left:79px;top:482px;font-size:11px;color:#e6e6e6;">Doors</div>
<div class="a" style="left:62px;top:498px;width:11px;height:11px;border-radius:50%;background:#484848;box-shadow:inset 0 0 0 1px #5a5a5a"></div>
<div class="t" style="left:79px;top:497px;font-size:11px;color:#e6e6e6;">Drawers</div>
<div class="a" style="left:132px;top:468px;width:11px;height:11px;border-radius:50%;background:#484848;box-shadow:inset 0 0 0 1px #5a5a5a"></div>
<div class="t" style="left:149px;top:467px;font-size:11px;color:#e6e6e6;">V</div>
<div class="a" style="left:132px;top:483px;width:11px;height:11px;border-radius:50%;background:#484848;box-shadow:inset 0 0 0 1px #5a5a5a"></div>
<div class="a" style="left:134px;top:485px;width:7px;height:7px;border-radius:50%;background:#e0e0e0"></div>
<div class="t" style="left:149px;top:482px;font-size:11px;color:#e6e6e6;">H</div>
<div class="t" style="left:43px;width:70px;text-align:right;top:515px;font-size:10.7px;color:#8a8a8a">Doors</div>
<div class="a" style="left:118px;top:515px;width:42px;height:14px;background:#555555;"></div>
<div class="t" style="left:121px;top:516px;font-size:10.7px;color:#8a8a8a;letter-spacing:-0.2px">2,0</div>
<svg class="a" style="left:151px;top:517px" width="7" height="11"><path d="M3.5 0L6.5 4H0.5Z M3.5 10L6.5 6H0.5Z" fill="#9a9a9a"/></svg>
<div class="t" style="left:43px;width:70px;text-align:right;top:535px;font-size:10.7px;color:#8a8a8a">Drawers</div>
<div class="a" style="left:118px;top:535px;width:42px;height:14px;background:#555555;"></div>
<div class="t" style="left:121px;top:536px;font-size:10.7px;color:#8a8a8a;letter-spacing:-0.2px">4,0</div>
<svg class="a" style="left:151px;top:537px" width="7" height="11"><path d="M3.5 0L6.5 4H0.5Z M3.5 10L6.5 6H0.5Z" fill="#9a9a9a"/></svg>
<div class="a" style="left:181px;top:312px;width:119px;height:257px;border:1px solid #3a3a3a;border-radius:3px;box-shadow:inset 1px 1px 0 #555"></div>
<div class="t" style="left:184px;top:307px;font-size:10.7px;color:#8a8a8a;background:#505050;padding:0 2px">Floor Unit Two</div>
<div class="t" style="left:161px;width:69px;text-align:right;top:331px;font-size:10.7px;color:#8a8a8a">Width</div>
<div class="a" style="left:233px;top:331px;width:62px;height:14px;background:#555555;"></div>
<div class="t" style="left:236px;top:332px;font-size:10.7px;color:#8a8a8a;letter-spacing:-0.2px">80,0cm</div>
<svg class="a" style="left:286px;top:333px" width="7" height="11"><path d="M3.5 0L6.5 4H0.5Z M3.5 10L6.5 6H0.5Z" fill="#9a9a9a"/></svg>
<div class="t" style="left:161px;width:69px;text-align:right;top:351px;font-size:10.7px;color:#8a8a8a">Height</div>
<div class="a" style="left:233px;top:351px;width:62px;height:14px;background:#555555;"></div>
<div class="t" style="left:236px;top:352px;font-size:10.7px;color:#8a8a8a;letter-spacing:-0.2px">82,0cm</div>
<svg class="a" style="left:286px;top:353px" width="7" height="11"><path d="M3.5 0L6.5 4H0.5Z M3.5 10L6.5 6H0.5Z" fill="#9a9a9a"/></svg>
<div class="t" style="left:161px;width:69px;text-align:right;top:371px;font-size:10.7px;color:#8a8a8a">Depth</div>
<div class="a" style="left:233px;top:371px;width:62px;height:14px;background:#555555;"></div>
<div class="t" style="left:236px;top:372px;font-size:10.7px;color:#8a8a8a;letter-spacing:-0.2px">56,0cm</div>
<svg class="a" style="left:286px;top:373px" width="7" height="11"><path d="M3.5 0L6.5 4H0.5Z M3.5 10L6.5 6H0.5Z" fill="#9a9a9a"/></svg>
<div class="t" style="left:161px;width:69px;text-align:right;top:391px;font-size:10.7px;color:#8a8a8a">Thickness</div>
<div class="a" style="left:233px;top:391px;width:62px;height:14px;background:#555555;"></div>
<div class="t" style="left:236px;top:392px;font-size:10.7px;color:#8a8a8a;letter-spacing:-0.2px">1,0cm</div>
<svg class="a" style="left:286px;top:393px" width="7" height="11"><path d="M3.5 0L6.5 4H0.5Z M3.5 10L6.5 6H0.5Z" fill="#9a9a9a"/></svg>
<div class="t" style="left:161px;width:69px;text-align:right;top:411px;font-size:10.7px;color:#8a8a8a">Mask</div>
<div class="a" style="left:233px;top:411px;width:62px;height:14px;background:#555555;"></div>
<div class="t" style="left:236px;top:412px;font-size:10.7px;color:#8a8a8a;letter-spacing:-0.2px">10,0cm</div>
<svg class="a" style="left:286px;top:413px" width="7" height="11"><path d="M3.5 0L6.5 4H0.5Z M3.5 10L6.5 6H0.5Z" fill="#9a9a9a"/></svg>
<div class="t" style="left:161px;width:69px;text-align:right;top:431px;font-size:10.7px;color:#8a8a8a">Shelves</div>
<div class="a" style="left:233px;top:431px;width:62px;height:14px;background:#555555;"></div>
<div class="t" style="left:236px;top:432px;font-size:10.7px;color:#8a8a8a;letter-spacing:-0.2px">1,0</div>
<svg class="a" style="left:286px;top:433px" width="7" height="11"><path d="M3.5 0L6.5 4H0.5Z M3.5 10L6.5 6H0.5Z" fill="#9a9a9a"/></svg>
<div class="t" style="left:188px;top:451px;font-size:11px;color:#8a8a8a;">Front Panels</div>
<div class="a" style="left:190px;top:468px;width:11px;height:11px;border-radius:50%;background:#484848;box-shadow:inset 0 0 0 1px #5a5a5a"></div>
<div class="t" style="left:207px;top:467px;font-size:11px;color:#8a8a8a;">Open</div>
<div class="a" style="left:190px;top:483px;width:11px;height:11px;border-radius:50%;background:#484848;box-shadow:inset 0 0 0 1px #5a5a5a"></div>
<div class="t" style="left:207px;top:482px;font-size:11px;color:#8a8a8a;">Doors</div>
<div class="a" style="left:190px;top:498px;width:11px;height:11px;border-radius:50%;background:#484848;box-shadow:inset 0 0 0 1px #5a5a5a"></div>
<div class="t" style="left:207px;top:497px;font-size:11px;color:#8a8a8a;">Drawers</div>
<div class="a" style="left:260px;top:468px;width:11px;height:11px;border-radius:50%;background:#484848;box-shadow:inset 0 0 0 1px #5a5a5a"></div>
<div class="t" style="left:277px;top:467px;font-size:11px;color:#8a8a8a;">V</div>
<div class="a" style="left:260px;top:483px;width:11px;height:11px;border-radius:50%;background:#484848;box-shadow:inset 0 0 0 1px #5a5a5a"></div>
<div class="a" style="left:262px;top:485px;width:7px;height:7px;border-radius:50%;background:#9a9a9a"></div>
<div class="t" style="left:277px;top:482px;font-size:11px;color:#8a8a8a;">H</div>
<div class="t" style="left:171px;width:70px;text-align:right;top:515px;font-size:10.7px;color:#8a8a8a">Doors</div>
<div class="a" style="left:246px;top:515px;width:42px;height:14px;background:#555555;"></div>
<div class="t" style="left:249px;top:516px;font-size:10.7px;color:#8a8a8a;letter-spacing:-0.2px">2,0</div>
<svg class="a" style="left:279px;top:517px" width="7" height="11"><path d="M3.5 0L6.5 4H0.5Z M3.5 10L6.5 6H0.5Z" fill="#9a9a9a"/></svg>
<div class="t" style="left:171px;width:70px;text-align:right;top:535px;font-size:10.7px;color:#8a8a8a">Drawers</div>
<div class="a" style="left:246px;top:535px;width:42px;height:14px;background:#555555;"></div>
<div class="t" style="left:249px;top:536px;font-size:10.7px;color:#8a8a8a;letter-spacing:-0.2px">4,0</div>
<svg class="a" style="left:279px;top:537px" width="7" height="11"><path d="M3.5 0L6.5 4H0.5Z M3.5 10L6.5 6H0.5Z" fill="#9a9a9a"/></svg>
<div class="a" style="left:309px;top:312px;width:119px;height:257px;border:1px solid #3a3a3a;border-radius:3px;box-shadow:inset 1px 1px 0 #555"></div>
<div class="t" style="left:312px;top:307px;font-size:10.7px;color:#8a8a8a;background:#505050;padding:0 2px">Floor Unit Tree</div>
<div class="t" style="left:289px;width:69px;text-align:right;top:331px;font-size:10.7px;color:#8a8a8a">Width</div>
<div class="a" style="left:361px;top:331px;width:62px;height:14px;background:#555555;"></div>
<div class="t" style="left:364px;top:332px;font-size:10.7px;color:#8a8a8a;letter-spacing:-0.2px">80,0cm</div>
<svg class="a" style="left:414px;top:333px" width="7" height="11"><path d="M3.5 0L6.5 4H0.5Z M3.5 10L6.5 6H0.5Z" fill="#9a9a9a"/></svg>
<div class="t" style="left:289px;width:69px;text-align:right;top:351px;font-size:10.7px;color:#8a8a8a">Height</div>
<div class="a" style="left:361px;top:351px;width:62px;height:14px;background:#555555;"></div>
<div class="t" style="left:364px;top:352px;font-size:10.7px;color:#8a8a8a;letter-spacing:-0.2px">82,0cm</div>
<svg class="a" style="left:414px;top:353px" width="7" height="11"><path d="M3.5 0L6.5 4H0.5Z M3.5 10L6.5 6H0.5Z" fill="#9a9a9a"/></svg>
<div class="t" style="left:289px;width:69px;text-align:right;top:371px;font-size:10.7px;color:#8a8a8a">Depth</div>
<div class="a" style="left:361px;top:371px;width:62px;height:14px;background:#555555;"></div>
<div class="t" style="left:364px;top:372px;font-size:10.7px;color:#8a8a8a;letter-spacing:-0.2px">56,0cm</div>
<svg class="a" style="left:414px;top:373px" width="7" height="11"><path d="M3.5 0L6.5 4H0.5Z M3.5 10L6.5 6H0.5Z" fill="#9a9a9a"/></svg>
<div class="t" style="left:289px;width:69px;text-align:right;top:391px;font-size:10.7px;color:#8a8a8a">Thickness</div>
<div class="a" style="left:361px;top:391px;width:62px;height:14px;background:#555555;"></div>
<div class="t" style="left:364px;top:392px;font-size:10.7px;color:#8a8a8a;letter-spacing:-0.2px">1,0cm</div>
<svg class="a" style="left:414px;top:393px" width="7" height="11"><path d="M3.5 0L6.5 4H0.5Z M3.5 10L6.5 6H0.5Z" fill="#9a9a9a"/></svg>
<div class="t" style="left:289px;width:69px;text-align:right;top:411px;font-size:10.7px;color:#8a8a8a">Mask</div>
<div class="a" style="left:361px;top:411px;width:62px;height:14px;background:#555555;"></div>
<div class="t" style="left:364px;top:412px;font-size:10.7px;color:#8a8a8a;letter-spacing:-0.2px">10,0cm</div>
<svg class="a" style="left:414px;top:413px" width="7" height="11"><path d="M3.5 0L6.5 4H0.5Z M3.5 10L6.5 6H0.5Z" fill="#9a9a9a"/></svg>
<div class="t" style="left:289px;width:69px;text-align:right;top:431px;font-size:10.7px;color:#8a8a8a">Shelves</div>
<div class="a" style="left:361px;top:431px;width:62px;height:14px;background:#555555;"></div>
<div class="t" style="left:364px;top:432px;font-size:10.7px;color:#8a8a8a;letter-spacing:-0.2px">1,0</div>
<svg class="a" style="left:414px;top:433px" width="7" height="11"><path d="M3.5 0L6.5 4H0.5Z M3.5 10L6.5 6H0.5Z" fill="#9a9a9a"/></svg>
<div class="t" style="left:316px;top:451px;font-size:11px;color:#8a8a8a;">Front Panels</div>
<div class="a" style="left:318px;top:468px;width:11px;height:11px;border-radius:50%;background:#484848;box-shadow:inset 0 0 0 1px #5a5a5a"></div>
<div class="t" style="left:335px;top:467px;font-size:11px;color:#8a8a8a;">Open</div>
<div class="a" style="left:318px;top:483px;width:11px;height:11px;border-radius:50%;background:#484848;box-shadow:inset 0 0 0 1px #5a5a5a"></div>
<div class="t" style="left:335px;top:482px;font-size:11px;color:#8a8a8a;">Doors</div>
<div class="a" style="left:318px;top:498px;width:11px;height:11px;border-radius:50%;background:#484848;box-shadow:inset 0 0 0 1px #5a5a5a"></div>
<div class="t" style="left:335px;top:497px;font-size:11px;color:#8a8a8a;">Drawers</div>
<div class="a" style="left:388px;top:468px;width:11px;height:11px;border-radius:50%;background:#484848;box-shadow:inset 0 0 0 1px #5a5a5a"></div>
<div class="t" style="left:405px;top:467px;font-size:11px;color:#8a8a8a;">V</div>
<div class="a" style="left:388px;top:483px;width:11px;height:11px;border-radius:50%;background:#484848;box-shadow:inset 0 0 0 1px #5a5a5a"></div>
<div class="a" style="left:390px;top:485px;width:7px;height:7px;border-radius:50%;background:#9a9a9a"></div>
<div class="t" style="left:405px;top:482px;font-size:11px;color:#8a8a8a;">H</div>
<div class="t" style="left:299px;width:70px;text-align:right;top:515px;font-size:10.7px;color:#8a8a8a">Doors</div>
<div class="a" style="left:374px;top:515px;width:42px;height:14px;background:#555555;"></div>
<div class="t" style="left:377px;top:516px;font-size:10.7px;color:#8a8a8a;letter-spacing:-0.2px">2,0</div>
<svg class="a" style="left:407px;top:517px" width="7" height="11"><path d="M3.5 0L6.5 4H0.5Z M3.5 10L6.5 6H0.5Z" fill="#9a9a9a"/></svg>
<div class="t" style="left:299px;width:70px;text-align:right;top:535px;font-size:10.7px;color:#8a8a8a">Drawers</div>
<div class="a" style="left:374px;top:535px;width:42px;height:14px;background:#555555;"></div>
<div class="t" style="left:377px;top:536px;font-size:10.7px;color:#8a8a8a;letter-spacing:-0.2px">4,0</div>
<svg class="a" style="left:407px;top:537px" width="7" height="11"><path d="M3.5 0L6.5 4H0.5Z M3.5 10L6.5 6H0.5Z" fill="#9a9a9a"/></svg>
<div class="a" style="left:438px;top:312px;width:119px;height:257px;border:1px solid #3a3a3a;border-radius:3px;box-shadow:inset 1px 1px 0 #555"></div>
<div class="t" style="left:441px;top:307px;font-size:10.7px;color:#8a8a8a;background:#505050;padding:0 2px">Floor Unit Four</div>
<div class="t" style="left:418px;width:69px;text-align:right;top:331px;font-size:10.7px;color:#8a8a8a">Width</div>
<div class="a" style="left:490px;top:331px;width:62px;height:14px;background:#555555;"></div>
<div class="t" style="left:493px;top:332px;font-size:10.7px;color:#8a8a8a;letter-spacing:-0.2px">80,0cm</div>
<svg class="a" style="left:543px;top:333px" width="7" height="11"><path d="M3.5 0L6.5 4H0.5Z M3.5 10L6.5 6H0.5Z" fill="#9a9a9a"/></svg>
<div class="t" style="left:418px;width:69px;text-align:right;top:351px;font-size:10.7px;color:#8a8a8a">Height</div>
<div class="a" style="left:490px;top:351px;width:62px;height:14px;background:#555555;"></div>
<div class="t" style="left:493px;top:352px;font-size:10.7px;color:#8a8a8a;letter-spacing:-0.2px">82,0cm</div>
<svg class="a" style="left:543px;top:353px" width="7" height="11"><path d="M3.5 0L6.5 4H0.5Z M3.5 10L6.5 6H0.5Z" fill="#9a9a9a"/></svg>
<div class="t" style="left:418px;width:69px;text-align:right;top:371px;font-size:10.7px;color:#8a8a8a">Depth</div>
<div class="a" style="left:490px;top:371px;width:62px;height:14px;background:#555555;"></div>
<div class="t" style="left:493px;top:372px;font-size:10.7px;color:#8a8a8a;letter-spacing:-0.2px">56,0cm</div>
<svg class="a" style="left:543px;top:373px" width="7" height="11"><path d="M3.5 0L6.5 4H0.5Z M3.5 10L6.5 6H0.5Z" fill="#9a9a9a"/></svg>
<div class="t" style="left:418px;width:69px;text-align:right;top:391px;font-size:10.7px;color:#8a8a8a">Thickness</div>
<div class="a" style="left:490px;top:391px;width:62px;height:14px;background:#555555;"></div>
<div class="t" style="left:493px;top:392px;font-size:10.7px;color:#8a8a8a;letter-spacing:-0.2px">1,0cm</div>
<svg class="a" style="left:543px;top:393px" width="7" height="11"><path d="M3.5 0L6.5 4H0.5Z M3.5 10L6.5 6H0.5Z" fill="#9a9a9a"/></svg>
<div class="t" style="left:418px;width:69px;text-align:right;top:411px;font-size:10.7px;color:#8a8a8a">Mask</div>
<div class="a" style="left:490px;top:411px;width:62px;height:14px;background:#555555;"></div>
<div class="t" style="left:493px;top:412px;font-size:10.7px;color:#8a8a8a;letter-spacing:-0.2px">10,0cm</div>
<svg class="a" style="left:543px;top:413px" width="7" height="11"><path d="M3.5 0L6.5 4H0.5Z M3.5 10L6.5 6H0.5Z" fill="#9a9a9a"/></svg>
<div class="t" style="left:418px;width:69px;text-align:right;top:431px;font-size:10.7px;color:#8a8a8a">Shelves</div>
<div class="a" style="left:490px;top:431px;width:62px;height:14px;background:#555555;"></div>
<div class="t" style="left:493px;top:432px;font-size:10.7px;color:#8a8a8a;letter-spacing:-0.2px">1,0</div>
<svg class="a" style="left:543px;top:433px" width="7" height="11"><path d="M3.5 0L6.5 4H0.5Z M3.5 10L6.5 6H0.5Z" fill="#9a9a9a"/></svg>
<div class="t" style="left:445px;top:451px;font-size:11px;color:#8a8a8a;">Front Panels</div>
<div class="a" style="left:447px;top:468px;width:11px;height:11px;border-radius:50%;background:#484848;box-shadow:inset 0 0 0 1px #5a5a5a"></div>
<div class="t" style="left:464px;top:467px;font-size:11px;color:#8a8a8a;">Open</div>
<div class="a" style="left:447px;top:483px;width:11px;height:11px;border-radius:50%;background:#484848;box-shadow:inset 0 0 0 1px #5a5a5a"></div>
<div class="t" style="left:464px;top:482px;font-size:11px;color:#8a8a8a;">Doors</div>
<div class="a" style="left:447px;top:498px;width:11px;height:11px;border-radius:50%;background:#484848;box-shadow:inset 0 0 0 1px #5a5a5a"></div>
<div class="t" style="left:464px;top:497px;font-size:11px;color:#8a8a8a;">Drawers</div>
<div class="a" style="left:517px;top:468px;width:11px;height:11px;border-radius:50%;background:#484848;box-shadow:inset 0 0 0 1px #5a5a5a"></div>
<div class="t" style="left:534px;top:467px;font-size:11px;color:#8a8a8a;">V</div>
<div class="a" style="left:517px;top:483px;width:11px;height:11px;border-radius:50%;background:#484848;box-shadow:inset 0 0 0 1px #5a5a5a"></div>
<div class="a" style="left:519px;top:485px;width:7px;height:7px;border-radius:50%;background:#9a9a9a"></div>
<div class="t" style="left:534px;top:482px;font-size:11px;color:#8a8a8a;">H</div>
<div class="t" style="left:428px;width:70px;text-align:right;top:515px;font-size:10.7px;color:#8a8a8a">Doors</div>
<div class="a" style="left:503px;top:515px;width:42px;height:14px;background:#555555;"></div>
<div class="t" style="left:506px;top:516px;font-size:10.7px;color:#8a8a8a;letter-spacing:-0.2px">2,0</div>
<svg class="a" style="left:536px;top:517px" width="7" height="11"><path d="M3.5 0L6.5 4H0.5Z M3.5 10L6.5 6H0.5Z" fill="#9a9a9a"/></svg>
<div class="t" style="left:428px;width:70px;text-align:right;top:535px;font-size:10.7px;color:#8a8a8a">Drawers</div>
<div class="a" style="left:503px;top:535px;width:42px;height:14px;background:#555555;"></div>
<div class="t" style="left:506px;top:536px;font-size:10.7px;color:#8a8a8a;letter-spacing:-0.2px">4,0</div>
<svg class="a" style="left:536px;top:537px" width="7" height="11"><path d="M3.5 0L6.5 4H0.5Z M3.5 10L6.5 6H0.5Z" fill="#9a9a9a"/></svg>
<div class="a" style="left:566px;top:312px;width:119px;height:257px;border:1px solid #3a3a3a;border-radius:3px;box-shadow:inset 1px 1px 0 #555"></div>
<div class="t" style="left:569px;top:307px;font-size:10.7px;color:#8a8a8a;background:#505050;padding:0 2px">Floor Unit Five</div>
<div class="t" style="left:546px;width:69px;text-align:right;top:331px;font-size:10.7px;color:#8a8a8a">Width</div>
<div class="a" style="left:618px;top:331px;width:62px;height:14px;background:#555555;"></div>
<div class="t" style="left:621px;top:332px;font-size:10.7px;color:#8a8a8a;letter-spacing:-0.2px">80,0cm</div>
<svg class="a" style="left:671px;top:333px" width="7" height="11"><path d="M3.5 0L6.5 4H0.5Z M3.5 10L6.5 6H0.5Z" fill="#9a9a9a"/></svg>
<div class="t" style="left:546px;width:69px;text-align:right;top:351px;font-size:10.7px;color:#8a8a8a">Height</div>
<div class="a" style="left:618px;top:351px;width:62px;height:14px;background:#555555;"></div>
<div class="t" style="left:621px;top:352px;font-size:10.7px;color:#8a8a8a;letter-spacing:-0.2px">82,0cm</div>
<svg class="a" style="left:671px;top:353px" width="7" height="11"><path d="M3.5 0L6.5 4H0.5Z M3.5 10L6.5 6H0.5Z" fill="#9a9a9a"/></svg>
<div class="t" style="left:546px;width:69px;text-align:right;top:371px;font-size:10.7px;color:#8a8a8a">Depth</div>
<div class="a" style="left:618px;top:371px;width:62px;height:14px;background:#555555;"></div>
<div class="t" style="left:621px;top:372px;font-size:10.7px;color:#8a8a8a;letter-spacing:-0.2px">56,0cm</div>
<svg class="a" style="left:671px;top:373px" width="7" height="11"><path d="M3.5 0L6.5 4H0.5Z M3.5 10L6.5 6H0.5Z" fill="#9a9a9a"/></svg>
<div class="t" style="left:546px;width:69px;text-align:right;top:391px;font-size:10.7px;color:#8a8a8a">Thickness</div>
<div class="a" style="left:618px;top:391px;width:62px;height:14px;background:#555555;"></div>
<div class="t" style="left:621px;top:392px;font-size:10.7px;color:#8a8a8a;letter-spacing:-0.2px">1,0cm</div>
<svg class="a" style="left:671px;top:393px" width="7" height="11"><path d="M3.5 0L6.5 4H0.5Z M3.5 10L6.5 6H0.5Z" fill="#9a9a9a"/></svg>
<div class="t" style="left:546px;width:69px;text-align:right;top:411px;font-size:10.7px;color:#8a8a8a">Mask</div>
<div class="a" style="left:618px;top:411px;width:62px;height:14px;background:#555555;"></div>
<div class="t" style="left:621px;top:412px;font-size:10.7px;color:#8a8a8a;letter-spacing:-0.2px">10,0cm</div>
<svg class="a" style="left:671px;top:413px" width="7" height="11"><path d="M3.5 0L6.5 4H0.5Z M3.5 10L6.5 6H0.5Z" fill="#9a9a9a"/></svg>
<div class="t" style="left:546px;width:69px;text-align:right;top:431px;font-size:10.7px;color:#8a8a8a">Shelves</div>
<div class="a" style="left:618px;top:431px;width:62px;height:14px;background:#555555;"></div>
<div class="t" style="left:621px;top:432px;font-size:10.7px;color:#8a8a8a;letter-spacing:-0.2px">1,0</div>
<svg class="a" style="left:671px;top:433px" width="7" height="11"><path d="M3.5 0L6.5 4H0.5Z M3.5 10L6.5 6H0.5Z" fill="#9a9a9a"/></svg>
<div class="t" style="left:573px;top:451px;font-size:11px;color:#8a8a8a;">Front Panels</div>
<div class="a" style="left:575px;top:468px;width:11px;height:11px;border-radius:50%;background:#484848;box-shadow:inset 0 0 0 1px #5a5a5a"></div>
<div class="t" style="left:592px;top:467px;font-size:11px;color:#8a8a8a;">Open</div>
<div class="a" style="left:575px;top:483px;width:11px;height:11px;border-radius:50%;background:#484848;box-shadow:inset 0 0 0 1px #5a5a5a"></div>
<div class="t" style="left:592px;top:482px;font-size:11px;color:#8a8a8a;">Doors</div>
<div class="a" style="left:575px;top:498px;width:11px;height:11px;border-radius:50%;background:#484848;box-shadow:inset 0 0 0 1px #5a5a5a"></div>
<div class="t" style="left:592px;top:497px;font-size:11px;color:#8a8a8a;">Drawers</div>
<div class="a" style="left:645px;top:468px;width:11px;height:11px;border-radius:50%;background:#484848;box-shadow:inset 0 0 0 1px #5a5a5a"></div>
<div class="t" style="left:662px;top:467px;font-size:11px;color:#8a8a8a;">V</div>
<div class="a" style="left:645px;top:483px;width:11px;height:11px;border-radius:50%;background:#484848;box-shadow:inset 0 0 0 1px #5a5a5a"></div>
<div class="a" style="left:647px;top:485px;width:7px;height:7px;border-radius:50%;background:#9a9a9a"></div>
<div class="t" style="left:662px;top:482px;font-size:11px;color:#8a8a8a;">H</div>
<div class="t" style="left:556px;width:70px;text-align:right;top:515px;font-size:10.7px;color:#8a8a8a">Doors</div>
<div class="a" style="left:631px;top:515px;width:42px;height:14px;background:#555555;"></div>
<div class="t" style="left:634px;top:516px;font-size:10.7px;color:#8a8a8a;letter-spacing:-0.2px">2,0</div>
<svg class="a" style="left:664px;top:517px" width="7" height="11"><path d="M3.5 0L6.5 4H0.5Z M3.5 10L6.5 6H0.5Z" fill="#9a9a9a"/></svg>
<div class="t" style="left:556px;width:70px;text-align:right;top:535px;font-size:10.7px;color:#8a8a8a">Drawers</div>
<div class="a" style="left:631px;top:535px;width:42px;height:14px;background:#555555;"></div>
<div class="t" style="left:634px;top:536px;font-size:10.7px;color:#8a8a8a;letter-spacing:-0.2px">4,0</div>
<svg class="a" style="left:664px;top:537px" width="7" height="11"><path d="M3.5 0L6.5 4H0.5Z M3.5 10L6.5 6H0.5Z" fill="#9a9a9a"/></svg>
<div class="a" style="left:694px;top:312px;width:119px;height:257px;border:1px solid #3a3a3a;border-radius:3px;box-shadow:inset 1px 1px 0 #555"></div>
<div class="t" style="left:697px;top:307px;font-size:10.7px;color:#8a8a8a;background:#505050;padding:0 2px">Floor Unit Six</div>
<div class="t" style="left:674px;width:69px;text-align:right;top:331px;font-size:10.7px;color:#8a8a8a">Width</div>
<div class="a" style="left:746px;top:331px;width:62px;height:14px;background:#555555;"></div>
<div class="t" style="left:749px;top:332px;font-size:10.7px;color:#8a8a8a;letter-spacing:-0.2px">80,0cm</div>
<svg class="a" style="left:799px;top:333px" width="7" height="11"><path d="M3.5 0L6.5 4H0.5Z M3.5 10L6.5 6H0.5Z" fill="#9a9a9a"/></svg>
<div class="t" style="left:674px;width:69px;text-align:right;top:351px;font-size:10.7px;color:#8a8a8a">Height</div>
<div class="a" style="left:746px;top:351px;width:62px;height:14px;background:#555555;"></div>
<div class="t" style="left:749px;top:352px;font-size:10.7px;color:#8a8a8a;letter-spacing:-0.2px">82,0cm</div>
<svg class="a" style="left:799px;top:353px" width="7" height="11"><path d="M3.5 0L6.5 4H0.5Z M3.5 10L6.5 6H0.5Z" fill="#9a9a9a"/></svg>
<div class="t" style="left:674px;width:69px;text-align:right;top:371px;font-size:10.7px;color:#8a8a8a">Depth</div>
<div class="a" style="left:746px;top:371px;width:62px;height:14px;background:#555555;"></div>
<div class="t" style="left:749px;top:372px;font-size:10.7px;color:#8a8a8a;letter-spacing:-0.2px">56,0cm</div>
<svg class="a" style="left:799px;top:373px" width="7" height="11"><path d="M3.5 0L6.5 4H0.5Z M3.5 10L6.5 6H0.5Z" fill="#9a9a9a"/></svg>
<div class="t" style="left:674px;width:69px;text-align:right;top:391px;font-size:10.7px;color:#8a8a8a">Thickness</div>
<div class="a" style="left:746px;top:391px;width:62px;height:14px;background:#555555;"></div>
<div class="t" style="left:749px;top:392px;font-size:10.7px;color:#8a8a8a;letter-spacing:-0.2px">1,0cm</div>
<svg class="a" style="left:799px;top:393px" width="7" height="11"><path d="M3.5 0L6.5 4H0.5Z M3.5 10L6.5 6H0.5Z" fill="#9a9a9a"/></svg>
<div class="t" style="left:674px;width:69px;text-align:right;top:411px;font-size:10.7px;color:#8a8a8a">Mask</div>
<div class="a" style="left:746px;top:411px;width:62px;height:14px;background:#555555;"></div>
<div class="t" style="left:749px;top:412px;font-size:10.7px;color:#8a8a8a;letter-spacing:-0.2px">10,0cm</div>
<svg class="a" style="left:799px;top:413px" width="7" height="11"><path d="M3.5 0L6.5 4H0.5Z M3.5 10L6.5 6H0.5Z" fill="#9a9a9a"/></svg>
<div class="t" style="left:674px;width:69px;text-align:right;top:431px;font-size:10.7px;color:#8a8a8a">Shelves</div>
<div class="a" style="left:746px;top:431px;width:62px;height:14px;background:#555555;"></div>
<div class="t" style="left:749px;top:432px;font-size:10.7px;color:#8a8a8a;letter-spacing:-0.2px">1,0</div>
<svg class="a" style="left:799px;top:433px" width="7" height="11"><path d="M3.5 0L6.5 4H0.5Z M3.5 10L6.5 6H0.5Z" fill="#9a9a9a"/></svg>
<div class="t" style="left:701px;top:451px;font-size:11px;color:#8a8a8a;">Front Panels</div>
<div class="a" style="left:703px;top:468px;width:11px;height:11px;border-radius:50%;background:#484848;box-shadow:inset 0 0 0 1px #5a5a5a"></div>
<div class="t" style="left:720px;top:467px;font-size:11px;color:#8a8a8a;">Open</div>
<div class="a" style="left:703px;top:483px;width:11px;height:11px;border-radius:50%;background:#484848;box-shadow:inset 0 0 0 1px #5a5a5a"></div>
<div class="t" style="left:720px;top:482px;font-size:11px;color:#8a8a8a;">Doors</div>
<div class="a" style="left:703px;top:498px;width:11px;height:11px;border-radius:50%;background:#484848;box-shadow:inset 0 0 0 1px #5a5a5a"></div>
<div class="t" style="left:720px;top:497px;font-size:11px;color:#8a8a8a;">Drawers</div>
<div class="a" style="left:773px;top:468px;width:11px;height:11px;border-radius:50%;background:#484848;box-shadow:inset 0 0 0 1px #5a5a5a"></div>
<div class="t" style="left:790px;top:467px;font-size:11px;color:#8a8a8a;">V</div>
<div class="a" style="left:773px;top:483px;width:11px;height:11px;border-radius:50%;background:#484848;box-shadow:inset 0 0 0 1px #5a5a5a"></div>
<div class="a" style="left:775px;top:485px;width:7px;height:7px;border-radius:50%;background:#9a9a9a"></div>
<div class="t" style="left:790px;top:482px;font-size:11px;color:#8a8a8a;">H</div>
<div class="t" style="left:684px;width:70px;text-align:right;top:515px;font-size:10.7px;color:#8a8a8a">Doors</div>
<div class="a" style="left:759px;top:515px;width:42px;height:14px;background:#555555;"></div>
<div class="t" style="left:762px;top:516px;font-size:10.7px;color:#8a8a8a;letter-spacing:-0.2px">2,0</div>
<svg class="a" style="left:792px;top:517px" width="7" height="11"><path d="M3.5 0L6.5 4H0.5Z M3.5 10L6.5 6H0.5Z" fill="#9a9a9a"/></svg>
<div class="t" style="left:684px;width:70px;text-align:right;top:535px;font-size:10.7px;color:#8a8a8a">Drawers</div>
<div class="a" style="left:759px;top:535px;width:42px;height:14px;background:#555555;"></div>
<div class="t" style="left:762px;top:536px;font-size:10.7px;color:#8a8a8a;letter-spacing:-0.2px">4,0</div>
<svg class="a" style="left:792px;top:537px" width="7" height="11"><path d="M3.5 0L6.5 4H0.5Z M3.5 10L6.5 6H0.5Z" fill="#9a9a9a"/></svg>
<div class="a" style="left:39px;top:579px;width:790px;height:20px;background:#505050;border-bottom:1px solid #3a3a3a;border-radius:2px"></div>
<svg class="a" style="left:46px;top:585px" width="5" height="7"><path d="M0 0L5 3.5L0 7Z" fill="#bbb"/></svg>
<div class="t" style="left:59px;top:583px;font-size:11.8px;color:#f2f2f2;font-weight:bold">Help</div>
<svg class="a" style="left:813px;top:584px" width="8" height="8"><g fill="#8a8a8a"><rect x="0" y="0" width="1" height="1"/><rect x="3" y="0" width="1" height="1"/><rect x="6" y="0" width="1" height="1"/><rect x="0" y="3" width="1" height="1"/><rect x="3" y="3" width="1" height="1"/><rect x="6" y="3" width="1" height="1"/><rect x="0" y="6" width="1" height="1"/><rect x="3" y="6" width="1" height="1"/><rect x="6" y="6" width="1" height="1"/></g></svg>
<div class="a" style="left:39px;top:602px;width:790px;height:20px;background:#505050;border-bottom:1px solid #3a3a3a;border-radius:2px"></div>
<svg class="a" style="left:46px;top:608px" width="5" height="7"><path d="M0 0L5 3.5L0 7Z" fill="#bbb"/></svg>
<div class="t" style="left:59px;top:606px;font-size:11.8px;color:#f2f2f2;font-weight:bold">About</div>
<svg class="a" style="left:813px;top:607px" width="8" height="8"><g fill="#8a8a8a"><rect x="0" y="0" width="1" height="1"/><rect x="3" y="0" width="1" height="1"/><rect x="6" y="0" width="1" height="1"/><rect x="0" y="3" width="1" height="1"/><rect x="3" y="3" width="1" height="1"/><rect x="6" y="3" width="1" height="1"/><rect x="0" y="6" width="1" height="1"/><rect x="3" y="6" width="1" height="1"/><rect x="6" y="6" width="1" height="1"/></g></svg>
<svg class="a" style="left:0;top:0" width="1913" height="1040">
<text x="1044" y="222" font-family="Liberation Sans" font-size="48" letter-spacing="0.88" fill="#f00" stroke="#f00" stroke-width="1.2">+10 cm y no menos si</text>
<text x="1088" y="278" font-family="Liberation Sans" font-size="48" letter-spacing="0.92" fill="#f00" stroke="#f00" stroke-width="1.2">toco el Length???</text>
<path d="M1037 338L1041 366 M1041 353C1068 357 1098 362 1138 371 M1141 356L1144 386 M1130 297C1116 312 1101 330 1093 345 M1086 318C1088 330 1090 339 1093 345C1105 343 1117 340 1127 338" fill="none" stroke="#f00" stroke-width="12" stroke-linecap="round" stroke-linejoin="round"/>
<text transform="translate(366 212) scale(1.04 1.02)" x="0" y="0" font-family="Liberation Sans" font-weight="bold" font-size="120" fill="#f00" text-anchor="middle">2</text>
</svg>
</body></html>
